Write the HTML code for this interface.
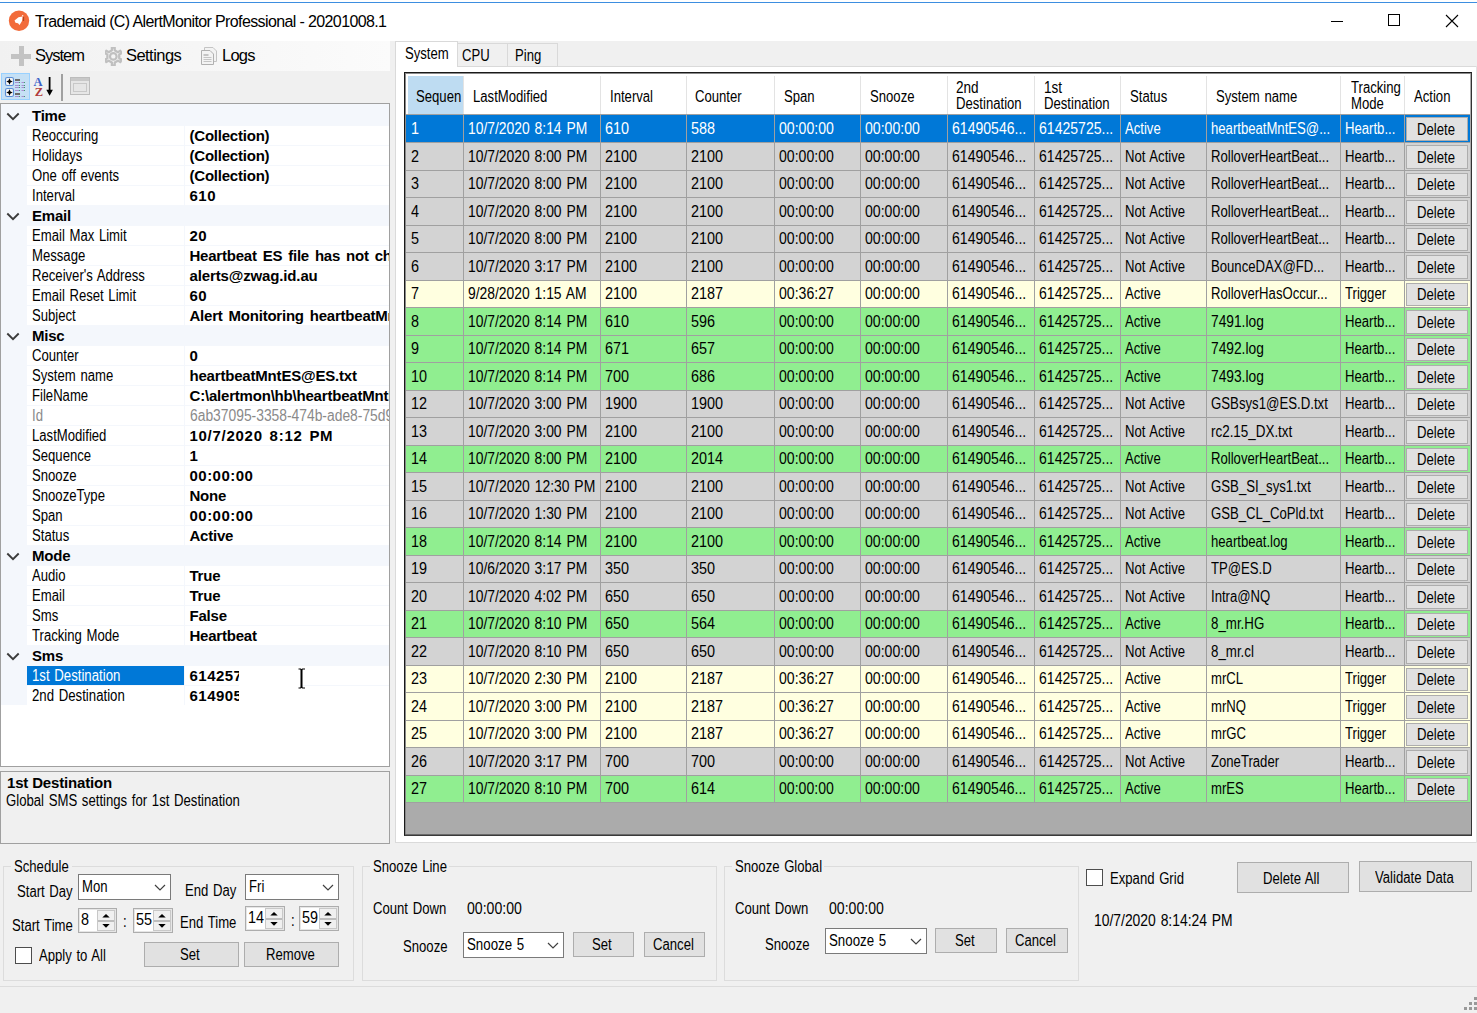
<!DOCTYPE html>
<html><head><meta charset="utf-8"><style>
html,body{margin:0;padding:0}
body{width:1477px;height:1013px;position:relative;overflow:hidden;background:#f0f0f0;font-family:"Liberation Sans",sans-serif;color:#000}
body div{position:absolute}
.t{white-space:pre}
.btn{background:#e1e1e1;border:1px solid #adadad;box-sizing:border-box;text-align:center;font-size:14.5px;letter-spacing:-0.6px;white-space:pre}
</style></head><body>
<div style="left:0px;top:0px;width:1477px;height:41px;background:#fff"></div>
<div style="left:0px;top:2px;width:1477px;height:1px;background:#3d8ee0"></div>
<svg style="position:absolute;left:8px;top:10px" width="22" height="22" viewBox="0 0 22 22"><circle cx="11" cy="10.8" r="10.2" fill="#f26b3a"/><path d="M6.5 10.5 L10.5 7.2 L14.5 6.5 L14 11 L12.5 13.5 L11.5 15 L10 13.2 L7.5 12.8 Z" fill="#fff"/><path d="M14.3 6.3 L15 5.2" stroke="#fff" stroke-width="1.2"/><path d="M15.6 7 V11" stroke="#9a3b1e" stroke-width="0.9"/></svg>
<div class="t" style="left:35px;top:13.76px;font-size:16px;line-height:16px;letter-spacing:-0.62px;word-spacing:0px;color:#000;">Trademaid (C) AlertMonitor Professional - 20201008.1</div>
<div style="left:1331px;top:21px;width:12px;height:1px;background:#000"></div>
<div style="left:1388px;top:14px;width:10px;height:10px;border:1px solid #000"></div>
<svg style="position:absolute;left:1445px;top:14px" width="14" height="14" viewBox="0 0 14 14"><path d="M1 1 L13 13 M13 1 L1 13" stroke="#000" stroke-width="1.1"/></svg>
<div style="left:0px;top:41px;width:390px;height:30px;background:linear-gradient(to right,#f1f1f1,#fbfbfb)"></div>
<div style="left:11px;top:54px;width:20px;height:5px;background:#c3c3c3"></div>
<div style="left:19px;top:46px;width:5px;height:20px;background:#c3c3c3"></div>
<div class="t" style="left:35px;top:47.03px;font-size:16.5px;line-height:16.5px;letter-spacing:-1.00px;word-spacing:0px;color:#000;">System</div>
<svg style="position:absolute;left:105px;top:47px" width="17" height="19" viewBox="0 0 17 19"><path d="M6.91 3.36 L6.89 0.51 L9.71 0.51 L9.69 3.36 L12.83 5.17 L15.29 3.74 L16.70 6.17 L14.23 7.59 L14.23 11.21 L16.70 12.63 L15.29 15.06 L12.83 13.63 L9.69 15.44 L9.71 18.29 L6.89 18.29 L6.91 15.44 L3.77 13.63 L1.31 15.06 L-0.10 12.63 L2.37 11.21 L2.37 7.59 L-0.10 6.17 L1.31 3.74 L3.77 5.17 Z" fill="none" stroke="#c0c0c0" stroke-width="2.3" stroke-linejoin="round"/><circle cx="8.3" cy="9.4" r="3.3" fill="none" stroke="#c0c0c0" stroke-width="2.2"/></svg>
<div class="t" style="left:126px;top:47.03px;font-size:16.5px;line-height:16.5px;letter-spacing:-0.55px;word-spacing:0px;color:#000;">Settings</div>
<svg style="position:absolute;left:200px;top:46px" width="18" height="20" viewBox="0 0 18 20"><path d="M4.5 1.5 H13 L16.5 5 V15.5 H4.5 Z" fill="#f3f3f3" stroke="#c4c4c4"/><path d="M1.5 4.5 H10 L13.5 8 V18.5 H1.5 Z" fill="#f3f3f3" stroke="#b0b0b0"/><rect x="3.5" y="8" width="5" height="2" fill="#c4c4c4"/><rect x="3.5" y="11" width="8" height="1" fill="#c4c4c4"/><rect x="3.5" y="13" width="8" height="1" fill="#c4c4c4"/><rect x="3.5" y="15" width="8" height="1" fill="#c4c4c4"/></svg>
<div class="t" style="left:222px;top:47.03px;font-size:16.5px;line-height:16.5px;letter-spacing:-0.80px;word-spacing:0px;color:#000;">Logs</div>
<div style="left:0px;top:71px;width:390px;height:32px;background:#f0f0f0"></div>
<div style="left:1px;top:73px;width:29px;height:27px;background:#c5e0f5;border:1px solid #99d1ff;box-sizing:border-box"></div>
<svg style="position:absolute;left:0px;top:70px" width="100" height="33" viewBox="0 70 100 33"><rect x="5.5" y="77.5" width="8" height="8" rx="1.8" fill="#f4f4f4" stroke="#5a8ed6" stroke-width="1.1"/><rect x="5.5" y="88.5" width="8" height="8" rx="1.8" fill="#f4f4f4" stroke="#5a8ed6" stroke-width="1.1"/><path d="M9.5 78.3 L10.5 80.5 L12.7 81.5 L10.5 82.5 L9.5 84.7 L8.5 82.5 L6.3 81.5 L8.5 80.5 Z" fill="#000"/><path d="M9.5 89.3 L10.5 91.5 L12.7 92.5 L10.5 93.5 L9.5 95.7 L8.5 93.5 L6.3 92.5 L8.5 91.5 Z" fill="#000"/><rect x="15" y="79" width="5" height="2" fill="#6a6a6a"/><rect x="15" y="93" width="5" height="2" fill="#6a6a6a"/><rect x="15" y="82" width="4" height="1" fill="#a98fd0"/><rect x="19" y="82" width="1" height="1" fill="#3f9f6f"/><rect x="21.5" y="82" width="2.5" height="1" fill="#a98fd0"/><rect x="24" y="82" width="1" height="1" fill="#3f9f6f"/><rect x="15" y="85" width="4" height="1" fill="#a98fd0"/><rect x="19" y="85" width="1" height="1" fill="#3f9f6f"/><rect x="21.5" y="85" width="2.5" height="1" fill="#a98fd0"/><rect x="24" y="85" width="1" height="1" fill="#3f9f6f"/><rect x="15" y="87" width="4" height="1" fill="#a98fd0"/><rect x="19" y="87" width="1" height="1" fill="#3f9f6f"/><rect x="21.5" y="87" width="2.5" height="1" fill="#a98fd0"/><rect x="24" y="87" width="1" height="1" fill="#3f9f6f"/><rect x="15" y="90" width="4" height="1" fill="#a98fd0"/><rect x="19" y="90" width="1" height="1" fill="#3f9f6f"/><rect x="21.5" y="90" width="2.5" height="1" fill="#a98fd0"/><rect x="24" y="90" width="1" height="1" fill="#3f9f6f"/><rect x="15" y="96" width="4" height="1" fill="#a98fd0"/><rect x="19" y="96" width="1" height="1" fill="#3f9f6f"/><rect x="21.5" y="96" width="2.5" height="1" fill="#a98fd0"/><rect x="24" y="96" width="1" height="1" fill="#3f9f6f"/><text x="33.6" y="85.8" font-family="Liberation Serif" font-size="12.5" font-weight="bold" fill="#3f63c9">A</text><text x="34.8" y="95.8" font-family="Liberation Serif" font-size="12.5" font-weight="bold" fill="#b03a3a">Z</text><rect x="48.7" y="77" width="1.8" height="14" fill="#000"/><path d="M46.3 89.8 L52.9 89.8 L49.6 95.8 Z" fill="#000"/></svg>
<div style="left:61px;top:74px;width:2px;height:27px;background:#a0a0a0"></div>
<svg style="position:absolute;left:69px;top:76px" width="22" height="20" viewBox="0 0 22 20"><rect x="1.5" y="1.5" width="19" height="17" fill="#e6e6e6" stroke="#bcbcbc"/><rect x="2" y="2" width="18" height="3" fill="#c8c8c8"/><rect x="4.5" y="7.5" width="13" height="8" fill="none" stroke="#c8c8c8"/></svg>
<div style="left:0px;top:103px;width:390px;height:664px;background:#fff;border:1px solid #a0a0a0;box-sizing:border-box"></div>
<div style="left:1px;top:104px;width:388px;height:601px;background:#f4f7fc"></div>
<div style="left:1px;top:104px;width:388px;height:22px;background:#f4f7fc"></div>
<svg style="position:absolute;left:5.5px;top:111.5px" width="14" height="10" viewBox="0 0 14 10"><path d="M1.3 1.5 L7 7.2 L12.7 1.5" fill="none" stroke="#3c3c3c" stroke-width="1.9"/></svg>
<div class="t" style="left:32px;top:107.80px;font-size:15px;line-height:15px;letter-spacing:-0.22px;word-spacing:0px;font-weight:bold;color:#000;">Time</div>
<div style="left:27px;top:126px;width:157px;height:19px;background:#fff"></div>
<div style="left:185px;top:126px;width:204px;height:19px;background:#fff"></div>
<div class="t" style="left:32px;top:127.96px;font-size:16.0px;line-height:16.0px;word-spacing:1.22px;transform:scaleX(0.8200);transform-origin:0 0;color:#000;">Reoccuring</div>
<div style="left:185px;top:126px;width:204px;height:19px;overflow:hidden">
<div class="t" style="left:4.5px;top:1.80px;font-size:15px;line-height:15px;letter-spacing:-0.22px;word-spacing:2px;font-weight:bold;color:#000;">(Collection)</div>
</div>
<div style="left:27px;top:146px;width:157px;height:19px;background:#fff"></div>
<div style="left:185px;top:146px;width:204px;height:19px;background:#fff"></div>
<div class="t" style="left:32px;top:147.96px;font-size:16.0px;line-height:16.0px;word-spacing:1.22px;transform:scaleX(0.8200);transform-origin:0 0;color:#000;">Holidays</div>
<div style="left:185px;top:146px;width:204px;height:19px;overflow:hidden">
<div class="t" style="left:4.5px;top:1.80px;font-size:15px;line-height:15px;letter-spacing:-0.22px;word-spacing:2px;font-weight:bold;color:#000;">(Collection)</div>
</div>
<div style="left:27px;top:166px;width:157px;height:19px;background:#fff"></div>
<div style="left:185px;top:166px;width:204px;height:19px;background:#fff"></div>
<div class="t" style="left:32px;top:167.96px;font-size:16.0px;line-height:16.0px;word-spacing:1.22px;transform:scaleX(0.8200);transform-origin:0 0;color:#000;">One off events</div>
<div style="left:185px;top:166px;width:204px;height:19px;overflow:hidden">
<div class="t" style="left:4.5px;top:1.80px;font-size:15px;line-height:15px;letter-spacing:-0.22px;word-spacing:2px;font-weight:bold;color:#000;">(Collection)</div>
</div>
<div style="left:27px;top:186px;width:157px;height:19px;background:#fff"></div>
<div style="left:185px;top:186px;width:204px;height:19px;background:#fff"></div>
<div class="t" style="left:32px;top:187.96px;font-size:16.0px;line-height:16.0px;word-spacing:1.22px;transform:scaleX(0.8200);transform-origin:0 0;color:#000;">Interval</div>
<div style="left:185px;top:186px;width:204px;height:19px;overflow:hidden">
<div class="t" style="left:4.5px;top:1.80px;font-size:15px;line-height:15px;letter-spacing:0.48px;word-spacing:2px;font-weight:bold;color:#000;">610</div>
</div>
<div style="left:1px;top:206px;width:388px;height:20px;background:#f4f7fc"></div>
<svg style="position:absolute;left:5.5px;top:211.5px" width="14" height="10" viewBox="0 0 14 10"><path d="M1.3 1.5 L7 7.2 L12.7 1.5" fill="none" stroke="#3c3c3c" stroke-width="1.9"/></svg>
<div class="t" style="left:32px;top:207.80px;font-size:15px;line-height:15px;letter-spacing:-0.22px;word-spacing:0px;font-weight:bold;color:#000;">Email</div>
<div style="left:27px;top:226px;width:157px;height:19px;background:#fff"></div>
<div style="left:185px;top:226px;width:204px;height:19px;background:#fff"></div>
<div class="t" style="left:32px;top:227.96px;font-size:16.0px;line-height:16.0px;word-spacing:1.22px;transform:scaleX(0.8200);transform-origin:0 0;color:#000;">Email Max Limit</div>
<div style="left:185px;top:226px;width:204px;height:19px;overflow:hidden">
<div class="t" style="left:4.5px;top:1.80px;font-size:15px;line-height:15px;letter-spacing:0.48px;word-spacing:2px;font-weight:bold;color:#000;">20</div>
</div>
<div style="left:27px;top:246px;width:157px;height:19px;background:#fff"></div>
<div style="left:185px;top:246px;width:204px;height:19px;background:#fff"></div>
<div class="t" style="left:32px;top:247.96px;font-size:16.0px;line-height:16.0px;word-spacing:1.22px;transform:scaleX(0.8200);transform-origin:0 0;color:#000;">Message</div>
<div style="left:185px;top:246px;width:204px;height:19px;overflow:hidden">
<div class="t" style="left:4.5px;top:1.80px;font-size:15px;line-height:15px;letter-spacing:-0.22px;word-spacing:2px;font-weight:bold;color:#000;">Heartbeat ES file has not changed</div>
</div>
<div style="left:27px;top:266px;width:157px;height:19px;background:#fff"></div>
<div style="left:185px;top:266px;width:204px;height:19px;background:#fff"></div>
<div class="t" style="left:32px;top:267.96px;font-size:16.0px;line-height:16.0px;word-spacing:1.22px;transform:scaleX(0.8200);transform-origin:0 0;color:#000;">Receiver's Address</div>
<div style="left:185px;top:266px;width:204px;height:19px;overflow:hidden">
<div class="t" style="left:4.5px;top:1.80px;font-size:15px;line-height:15px;letter-spacing:-0.14px;word-spacing:2px;font-weight:bold;color:#000;">alerts@zwag.id.au</div>
</div>
<div style="left:27px;top:286px;width:157px;height:19px;background:#fff"></div>
<div style="left:185px;top:286px;width:204px;height:19px;background:#fff"></div>
<div class="t" style="left:32px;top:287.96px;font-size:16.0px;line-height:16.0px;word-spacing:1.22px;transform:scaleX(0.8200);transform-origin:0 0;color:#000;">Email Reset Limit</div>
<div style="left:185px;top:286px;width:204px;height:19px;overflow:hidden">
<div class="t" style="left:4.5px;top:1.80px;font-size:15px;line-height:15px;letter-spacing:0.48px;word-spacing:2px;font-weight:bold;color:#000;">60</div>
</div>
<div style="left:27px;top:306px;width:157px;height:19px;background:#fff"></div>
<div style="left:185px;top:306px;width:204px;height:19px;background:#fff"></div>
<div class="t" style="left:32px;top:307.96px;font-size:16.0px;line-height:16.0px;word-spacing:1.22px;transform:scaleX(0.8200);transform-origin:0 0;color:#000;">Subject</div>
<div style="left:185px;top:306px;width:204px;height:19px;overflow:hidden">
<div class="t" style="left:4.5px;top:1.80px;font-size:15px;line-height:15px;letter-spacing:-0.22px;word-spacing:2px;font-weight:bold;color:#000;">Alert Monitoring heartbeatMntES</div>
</div>
<div style="left:1px;top:326px;width:388px;height:20px;background:#f4f7fc"></div>
<svg style="position:absolute;left:5.5px;top:331.5px" width="14" height="10" viewBox="0 0 14 10"><path d="M1.3 1.5 L7 7.2 L12.7 1.5" fill="none" stroke="#3c3c3c" stroke-width="1.9"/></svg>
<div class="t" style="left:32px;top:327.80px;font-size:15px;line-height:15px;letter-spacing:-0.22px;word-spacing:0px;font-weight:bold;color:#000;">Misc</div>
<div style="left:27px;top:346px;width:157px;height:19px;background:#fff"></div>
<div style="left:185px;top:346px;width:204px;height:19px;background:#fff"></div>
<div class="t" style="left:32px;top:347.96px;font-size:16.0px;line-height:16.0px;word-spacing:1.22px;transform:scaleX(0.8200);transform-origin:0 0;color:#000;">Counter</div>
<div style="left:185px;top:346px;width:204px;height:19px;overflow:hidden">
<div class="t" style="left:4.5px;top:1.80px;font-size:15px;line-height:15px;letter-spacing:0.48px;word-spacing:2px;font-weight:bold;color:#000;">0</div>
</div>
<div style="left:27px;top:366px;width:157px;height:19px;background:#fff"></div>
<div style="left:185px;top:366px;width:204px;height:19px;background:#fff"></div>
<div class="t" style="left:32px;top:367.96px;font-size:16.0px;line-height:16.0px;word-spacing:1.22px;transform:scaleX(0.8200);transform-origin:0 0;color:#000;">System name</div>
<div style="left:185px;top:366px;width:204px;height:19px;overflow:hidden">
<div class="t" style="left:4.5px;top:1.80px;font-size:15px;line-height:15px;letter-spacing:-0.19px;word-spacing:2px;font-weight:bold;color:#000;">heartbeatMntES@ES.txt</div>
</div>
<div style="left:27px;top:386px;width:157px;height:19px;background:#fff"></div>
<div style="left:185px;top:386px;width:204px;height:19px;background:#fff"></div>
<div class="t" style="left:32px;top:387.96px;font-size:16.0px;line-height:16.0px;word-spacing:1.22px;transform:scaleX(0.8200);transform-origin:0 0;color:#000;">FileName</div>
<div style="left:185px;top:386px;width:204px;height:19px;overflow:hidden">
<div class="t" style="left:4.5px;top:1.80px;font-size:15px;line-height:15px;letter-spacing:-0.20px;word-spacing:2px;font-weight:bold;color:#000;">C:\alertmon\hb\heartbeatMntES</div>
</div>
<div style="left:27px;top:406px;width:157px;height:19px;background:#fff"></div>
<div style="left:185px;top:406px;width:204px;height:19px;background:#fff"></div>
<div class="t" style="left:32px;top:407.96px;font-size:16.0px;line-height:16.0px;word-spacing:1.22px;transform:scaleX(0.8200);transform-origin:0 0;color:#8a8a8a;">Id</div>
<div style="left:185px;top:406px;width:204px;height:19px;overflow:hidden">
<div class="t" style="left:4.5px;top:1.96px;font-size:16.0px;line-height:16.0px;word-spacing:1.16px;transform:scaleX(0.8650);transform-origin:0 0;color:#8a8a8a;">6ab37095-3358-474b-ade8-75d93abc</div>
</div>
<div style="left:27px;top:426px;width:157px;height:19px;background:#fff"></div>
<div style="left:185px;top:426px;width:204px;height:19px;background:#fff"></div>
<div class="t" style="left:32px;top:427.96px;font-size:16.0px;line-height:16.0px;word-spacing:1.22px;transform:scaleX(0.8200);transform-origin:0 0;color:#000;">LastModified</div>
<div style="left:185px;top:426px;width:204px;height:19px;overflow:hidden">
<div class="t" style="left:4.5px;top:1.80px;font-size:15px;line-height:15px;letter-spacing:0.72px;word-spacing:2px;font-weight:bold;color:#000;">10/7/2020 8:12 PM</div>
</div>
<div style="left:27px;top:446px;width:157px;height:19px;background:#fff"></div>
<div style="left:185px;top:446px;width:204px;height:19px;background:#fff"></div>
<div class="t" style="left:32px;top:447.96px;font-size:16.0px;line-height:16.0px;word-spacing:1.22px;transform:scaleX(0.8200);transform-origin:0 0;color:#000;">Sequence</div>
<div style="left:185px;top:446px;width:204px;height:19px;overflow:hidden">
<div class="t" style="left:4.5px;top:1.80px;font-size:15px;line-height:15px;letter-spacing:0.48px;word-spacing:2px;font-weight:bold;color:#000;">1</div>
</div>
<div style="left:27px;top:466px;width:157px;height:19px;background:#fff"></div>
<div style="left:185px;top:466px;width:204px;height:19px;background:#fff"></div>
<div class="t" style="left:32px;top:467.96px;font-size:16.0px;line-height:16.0px;word-spacing:1.22px;transform:scaleX(0.8200);transform-origin:0 0;color:#000;">Snooze</div>
<div style="left:185px;top:466px;width:204px;height:19px;overflow:hidden">
<div class="t" style="left:4.5px;top:1.80px;font-size:15px;line-height:15px;letter-spacing:0.48px;word-spacing:2px;font-weight:bold;color:#000;">00:00:00</div>
</div>
<div style="left:27px;top:486px;width:157px;height:19px;background:#fff"></div>
<div style="left:185px;top:486px;width:204px;height:19px;background:#fff"></div>
<div class="t" style="left:32px;top:487.96px;font-size:16.0px;line-height:16.0px;word-spacing:1.22px;transform:scaleX(0.8200);transform-origin:0 0;color:#000;">SnoozeType</div>
<div style="left:185px;top:486px;width:204px;height:19px;overflow:hidden">
<div class="t" style="left:4.5px;top:1.80px;font-size:15px;line-height:15px;letter-spacing:-0.22px;word-spacing:2px;font-weight:bold;color:#000;">None</div>
</div>
<div style="left:27px;top:506px;width:157px;height:19px;background:#fff"></div>
<div style="left:185px;top:506px;width:204px;height:19px;background:#fff"></div>
<div class="t" style="left:32px;top:507.96px;font-size:16.0px;line-height:16.0px;word-spacing:1.22px;transform:scaleX(0.8200);transform-origin:0 0;color:#000;">Span</div>
<div style="left:185px;top:506px;width:204px;height:19px;overflow:hidden">
<div class="t" style="left:4.5px;top:1.80px;font-size:15px;line-height:15px;letter-spacing:0.48px;word-spacing:2px;font-weight:bold;color:#000;">00:00:00</div>
</div>
<div style="left:27px;top:526px;width:157px;height:19px;background:#fff"></div>
<div style="left:185px;top:526px;width:204px;height:19px;background:#fff"></div>
<div class="t" style="left:32px;top:527.96px;font-size:16.0px;line-height:16.0px;word-spacing:1.22px;transform:scaleX(0.8200);transform-origin:0 0;color:#000;">Status</div>
<div style="left:185px;top:526px;width:204px;height:19px;overflow:hidden">
<div class="t" style="left:4.5px;top:1.80px;font-size:15px;line-height:15px;letter-spacing:-0.22px;word-spacing:2px;font-weight:bold;color:#000;">Active</div>
</div>
<div style="left:1px;top:546px;width:388px;height:20px;background:#f4f7fc"></div>
<svg style="position:absolute;left:5.5px;top:551.5px" width="14" height="10" viewBox="0 0 14 10"><path d="M1.3 1.5 L7 7.2 L12.7 1.5" fill="none" stroke="#3c3c3c" stroke-width="1.9"/></svg>
<div class="t" style="left:32px;top:547.80px;font-size:15px;line-height:15px;letter-spacing:-0.22px;word-spacing:0px;font-weight:bold;color:#000;">Mode</div>
<div style="left:27px;top:566px;width:157px;height:19px;background:#fff"></div>
<div style="left:185px;top:566px;width:204px;height:19px;background:#fff"></div>
<div class="t" style="left:32px;top:567.96px;font-size:16.0px;line-height:16.0px;word-spacing:1.22px;transform:scaleX(0.8200);transform-origin:0 0;color:#000;">Audio</div>
<div style="left:185px;top:566px;width:204px;height:19px;overflow:hidden">
<div class="t" style="left:4.5px;top:1.80px;font-size:15px;line-height:15px;letter-spacing:-0.22px;word-spacing:2px;font-weight:bold;color:#000;">True</div>
</div>
<div style="left:27px;top:586px;width:157px;height:19px;background:#fff"></div>
<div style="left:185px;top:586px;width:204px;height:19px;background:#fff"></div>
<div class="t" style="left:32px;top:587.96px;font-size:16.0px;line-height:16.0px;word-spacing:1.22px;transform:scaleX(0.8200);transform-origin:0 0;color:#000;">Email</div>
<div style="left:185px;top:586px;width:204px;height:19px;overflow:hidden">
<div class="t" style="left:4.5px;top:1.80px;font-size:15px;line-height:15px;letter-spacing:-0.22px;word-spacing:2px;font-weight:bold;color:#000;">True</div>
</div>
<div style="left:27px;top:606px;width:157px;height:19px;background:#fff"></div>
<div style="left:185px;top:606px;width:204px;height:19px;background:#fff"></div>
<div class="t" style="left:32px;top:607.96px;font-size:16.0px;line-height:16.0px;word-spacing:1.22px;transform:scaleX(0.8200);transform-origin:0 0;color:#000;">Sms</div>
<div style="left:185px;top:606px;width:204px;height:19px;overflow:hidden">
<div class="t" style="left:4.5px;top:1.80px;font-size:15px;line-height:15px;letter-spacing:-0.22px;word-spacing:2px;font-weight:bold;color:#000;">False</div>
</div>
<div style="left:27px;top:626px;width:157px;height:19px;background:#fff"></div>
<div style="left:185px;top:626px;width:204px;height:19px;background:#fff"></div>
<div class="t" style="left:32px;top:627.96px;font-size:16.0px;line-height:16.0px;word-spacing:1.22px;transform:scaleX(0.8200);transform-origin:0 0;color:#000;">Tracking Mode</div>
<div style="left:185px;top:626px;width:204px;height:19px;overflow:hidden">
<div class="t" style="left:4.5px;top:1.80px;font-size:15px;line-height:15px;letter-spacing:-0.22px;word-spacing:2px;font-weight:bold;color:#000;">Heartbeat</div>
</div>
<div style="left:1px;top:646px;width:388px;height:20px;background:#f4f7fc"></div>
<svg style="position:absolute;left:5.5px;top:651.5px" width="14" height="10" viewBox="0 0 14 10"><path d="M1.3 1.5 L7 7.2 L12.7 1.5" fill="none" stroke="#3c3c3c" stroke-width="1.9"/></svg>
<div class="t" style="left:32px;top:647.80px;font-size:15px;line-height:15px;letter-spacing:-0.22px;word-spacing:0px;font-weight:bold;color:#000;">Sms</div>
<div style="left:27px;top:666px;width:157px;height:19px;background:#0078d7"></div>
<div style="left:185px;top:666px;width:204px;height:19px;background:#fff"></div>
<div class="t" style="left:32px;top:667.96px;font-size:16.0px;line-height:16.0px;word-spacing:1.21px;transform:scaleX(0.8253);transform-origin:0 0;color:#fff;">1st Destination</div>
<div style="left:185px;top:666px;width:54px;height:19px;overflow:hidden">
<div class="t" style="left:4.5px;top:1.80px;font-size:15px;line-height:15px;letter-spacing:0.48px;word-spacing:0px;font-weight:bold;color:#000;">614257</div>
</div>
<div style="left:27px;top:686px;width:157px;height:19px;background:#fff"></div>
<div style="left:185px;top:686px;width:204px;height:19px;background:#fff"></div>
<div class="t" style="left:32px;top:687.96px;font-size:16.0px;line-height:16.0px;word-spacing:1.21px;transform:scaleX(0.8253);transform-origin:0 0;color:#000;">2nd Destination</div>
<div style="left:185px;top:686px;width:54px;height:19px;overflow:hidden">
<div class="t" style="left:4.5px;top:1.80px;font-size:15px;line-height:15px;letter-spacing:0.48px;word-spacing:0px;font-weight:bold;color:#000;">614905</div>
</div>
<div style="left:239px;top:685px;width:64px;height:1px;background:#fff"></div>
<svg style="position:absolute;left:297px;top:668px" width="9" height="21" viewBox="0 0 9 21"><path d="M1.5 1 H3.5 L4.5 2 L5.5 1 H8 M1.5 20 H3.5 L4.5 19 L5.5 20 H8" fill="none" stroke="#000" stroke-width="1.2"/><rect x="3.5" y="2" width="2" height="17" fill="#000"/></svg>
<div style="left:0px;top:771px;width:390px;height:73px;background:#f0f0f0;border:1px solid #a0a0a0;box-sizing:border-box"></div>
<div class="t" style="left:7px;top:775.30px;font-size:15px;line-height:15px;letter-spacing:-0.17px;word-spacing:0px;font-weight:bold;color:#000;">1st Destination</div>
<div class="t" style="left:6px;top:793.46px;font-size:16.0px;line-height:16.0px;word-spacing:1.22px;transform:scaleX(0.8221);transform-origin:0 0;color:#000;">Global SMS settings for 1st Destination</div>
<div style="left:395px;top:66px;width:1082px;height:777px;background:#fff;border:1px solid #dadada;border-right:none;box-sizing:border-box"></div>
<div style="left:1476px;top:66px;width:1px;height:777px;background:#e3e3e3"></div>
<div style="left:457px;top:43px;width:51px;height:24px;background:#f0f0f0;border:1px solid #d9d9d9;box-sizing:border-box"></div>
<div style="left:507px;top:43px;width:51px;height:24px;background:#f0f0f0;border:1px solid #d9d9d9;box-sizing:border-box"></div>
<div style="left:395px;top:41px;width:63px;height:26px;background:#fff;border:1px solid #d9d9d9;border-bottom:none;box-sizing:border-box"></div>
<div class="t" style="left:405px;top:45.96px;font-size:16.0px;line-height:16.0px;word-spacing:1.22px;transform:scaleX(0.8200);transform-origin:0 0;color:#000;">System</div>
<div class="t" style="left:462px;top:48.46px;font-size:16.0px;line-height:16.0px;word-spacing:1.22px;transform:scaleX(0.8200);transform-origin:0 0;color:#000;">CPU</div>
<div class="t" style="left:515px;top:48.46px;font-size:16.0px;line-height:16.0px;word-spacing:1.22px;transform:scaleX(0.8200);transform-origin:0 0;color:#000;">Ping</div>
<div style="left:404px;top:72px;width:1068px;height:764px;background:#ababab;border:1px solid #1a1a1a;border-right-color:#333;border-bottom-color:#3a3a3a;box-sizing:border-box"></div>
<div style="left:405px;top:73px;width:1066px;height:762px;border-left:1px solid #8a8a8a;border-top:1px solid #8a8a8a;box-sizing:border-box;background:transparent"></div>
<div style="left:405px;top:834px;width:1066px;height:1px;background:#6a6a6a"></div>
<div style="left:406px;top:74px;width:1064px;height:41px;background:#fff"></div>
<div style="left:408px;top:76px;width:55px;height:38px;background:#bedcf2"></div>
<div style="left:406px;top:114px;width:1064px;height:1px;background:#a0a0a0"></div>
<div style="left:463px;top:76px;width:1px;height:38px;background:#e3e3e3"></div>
<div style="left:600px;top:76px;width:1px;height:38px;background:#e3e3e3"></div>
<div style="left:686px;top:76px;width:1px;height:38px;background:#e3e3e3"></div>
<div style="left:774px;top:76px;width:1px;height:38px;background:#e3e3e3"></div>
<div style="left:860px;top:76px;width:1px;height:38px;background:#e3e3e3"></div>
<div style="left:947px;top:76px;width:1px;height:38px;background:#e3e3e3"></div>
<div style="left:1034px;top:76px;width:1px;height:38px;background:#e3e3e3"></div>
<div style="left:1120px;top:76px;width:1px;height:38px;background:#e3e3e3"></div>
<div style="left:1206px;top:76px;width:1px;height:38px;background:#e3e3e3"></div>
<div style="left:1340px;top:76px;width:1px;height:38px;background:#e3e3e3"></div>
<div style="left:1404px;top:76px;width:1px;height:38px;background:#e3e3e3"></div>
<div class="t" style="left:416px;top:89.46px;font-size:16.0px;line-height:16.0px;word-spacing:1.22px;transform:scaleX(0.8200);transform-origin:0 0;color:#000;">Sequen</div>
<div class="t" style="left:473px;top:89.46px;font-size:16.0px;line-height:16.0px;word-spacing:1.22px;transform:scaleX(0.8200);transform-origin:0 0;color:#000;">LastModified</div>
<div class="t" style="left:610px;top:89.46px;font-size:16.0px;line-height:16.0px;word-spacing:1.22px;transform:scaleX(0.8200);transform-origin:0 0;color:#000;">Interval</div>
<div class="t" style="left:695px;top:89.46px;font-size:16.0px;line-height:16.0px;word-spacing:1.22px;transform:scaleX(0.8200);transform-origin:0 0;color:#000;">Counter</div>
<div class="t" style="left:784px;top:89.46px;font-size:16.0px;line-height:16.0px;word-spacing:1.22px;transform:scaleX(0.8200);transform-origin:0 0;color:#000;">Span</div>
<div class="t" style="left:870px;top:89.46px;font-size:16.0px;line-height:16.0px;word-spacing:1.22px;transform:scaleX(0.8200);transform-origin:0 0;color:#000;">Snooze</div>
<div class="t" style="left:956px;top:80.46px;font-size:16.0px;line-height:16.0px;word-spacing:1.18px;transform:scaleX(0.8467);transform-origin:0 0;color:#000;">2nd</div>
<div class="t" style="left:956px;top:96.46px;font-size:16.0px;line-height:16.0px;word-spacing:1.22px;transform:scaleX(0.8200);transform-origin:0 0;color:#000;">Destination</div>
<div class="t" style="left:1044px;top:80.46px;font-size:16.0px;line-height:16.0px;word-spacing:1.18px;transform:scaleX(0.8467);transform-origin:0 0;color:#000;">1st</div>
<div class="t" style="left:1044px;top:96.46px;font-size:16.0px;line-height:16.0px;word-spacing:1.22px;transform:scaleX(0.8200);transform-origin:0 0;color:#000;">Destination</div>
<div class="t" style="left:1130px;top:89.46px;font-size:16.0px;line-height:16.0px;word-spacing:1.22px;transform:scaleX(0.8200);transform-origin:0 0;color:#000;">Status</div>
<div class="t" style="left:1216px;top:89.46px;font-size:16.0px;line-height:16.0px;word-spacing:1.22px;transform:scaleX(0.8200);transform-origin:0 0;color:#000;">System name</div>
<div class="t" style="left:1351px;top:80.46px;font-size:16.0px;line-height:16.0px;word-spacing:1.22px;transform:scaleX(0.8200);transform-origin:0 0;color:#000;">Tracking</div>
<div class="t" style="left:1351px;top:96.46px;font-size:16.0px;line-height:16.0px;word-spacing:1.22px;transform:scaleX(0.8200);transform-origin:0 0;color:#000;">Mode</div>
<div class="t" style="left:1414px;top:89.46px;font-size:16.0px;line-height:16.0px;word-spacing:1.22px;transform:scaleX(0.8200);transform-origin:0 0;color:#000;">Action</div>
<div style="left:406px;top:115px;width:1064px;height:27px;background:#0078d7"></div>
<div style="left:406px;top:142px;width:1064px;height:1px;background:#a0a0a0"></div>
<div style="left:463px;top:115px;width:1px;height:27px;background:#a0a0a0"></div>
<div style="left:600px;top:115px;width:1px;height:27px;background:#a0a0a0"></div>
<div style="left:686px;top:115px;width:1px;height:27px;background:#a0a0a0"></div>
<div style="left:774px;top:115px;width:1px;height:27px;background:#a0a0a0"></div>
<div style="left:860px;top:115px;width:1px;height:27px;background:#a0a0a0"></div>
<div style="left:947px;top:115px;width:1px;height:27px;background:#a0a0a0"></div>
<div style="left:1034px;top:115px;width:1px;height:27px;background:#a0a0a0"></div>
<div style="left:1120px;top:115px;width:1px;height:27px;background:#a0a0a0"></div>
<div style="left:1206px;top:115px;width:1px;height:27px;background:#a0a0a0"></div>
<div style="left:1340px;top:115px;width:1px;height:27px;background:#a0a0a0"></div>
<div style="left:1404px;top:115px;width:1px;height:27px;background:#a0a0a0"></div>
<div class="t" style="left:411px;top:120.96px;font-size:16.0px;line-height:16.0px;word-spacing:1.11px;transform:scaleX(0.9000);transform-origin:0 0;color:#fff;">1</div>
<div class="t" style="left:468px;top:120.96px;font-size:16.0px;line-height:16.0px;word-spacing:1.15px;transform:scaleX(0.8671);transform-origin:0 0;color:#fff;">10/7/2020 8:14 PM</div>
<div class="t" style="left:605px;top:120.96px;font-size:16.0px;line-height:16.0px;word-spacing:1.11px;transform:scaleX(0.9000);transform-origin:0 0;color:#fff;">610</div>
<div class="t" style="left:691px;top:120.96px;font-size:16.0px;line-height:16.0px;word-spacing:1.11px;transform:scaleX(0.9000);transform-origin:0 0;color:#fff;">588</div>
<div class="t" style="left:779px;top:120.96px;font-size:16.0px;line-height:16.0px;word-spacing:1.14px;transform:scaleX(0.8800);transform-origin:0 0;color:#fff;">00:00:00</div>
<div class="t" style="left:865px;top:120.96px;font-size:16.0px;line-height:16.0px;word-spacing:1.14px;transform:scaleX(0.8800);transform-origin:0 0;color:#fff;">00:00:00</div>
<div class="t" style="left:952px;top:120.96px;font-size:16.0px;line-height:16.0px;word-spacing:1.14px;transform:scaleX(0.8782);transform-origin:0 0;color:#fff;">61490546...</div>
<div class="t" style="left:1039px;top:120.96px;font-size:16.0px;line-height:16.0px;word-spacing:1.14px;transform:scaleX(0.8782);transform-origin:0 0;color:#fff;">61425725...</div>
<div class="t" style="left:1125px;top:120.96px;font-size:16.0px;line-height:16.0px;word-spacing:1.22px;transform:scaleX(0.8200);transform-origin:0 0;color:#fff;">Active</div>
<div class="t" style="left:1211px;top:120.96px;font-size:16.0px;line-height:16.0px;word-spacing:1.22px;transform:scaleX(0.8200);transform-origin:0 0;color:#fff;">heartbeatMntES@...</div>
<div class="t" style="left:1345px;top:120.96px;font-size:16.0px;line-height:16.0px;word-spacing:1.22px;transform:scaleX(0.8200);transform-origin:0 0;color:#fff;">Heartb...</div>
<div class="btn" style="left:1406px;top:117px;width:62px;height:24px"></div>
<div class="t" style="left:1416.5369875px;top:121.76px;font-size:16.0px;line-height:16.0px;word-spacing:1.22px;transform:scaleX(0.8200);transform-origin:0 0;color:#000;">Delete</div>
<div style="left:406px;top:143px;width:1064px;height:27px;background:#d3d3d3"></div>
<div style="left:406px;top:170px;width:1064px;height:1px;background:#a0a0a0"></div>
<div style="left:463px;top:143px;width:1px;height:27px;background:#a0a0a0"></div>
<div style="left:600px;top:143px;width:1px;height:27px;background:#a0a0a0"></div>
<div style="left:686px;top:143px;width:1px;height:27px;background:#a0a0a0"></div>
<div style="left:774px;top:143px;width:1px;height:27px;background:#a0a0a0"></div>
<div style="left:860px;top:143px;width:1px;height:27px;background:#a0a0a0"></div>
<div style="left:947px;top:143px;width:1px;height:27px;background:#a0a0a0"></div>
<div style="left:1034px;top:143px;width:1px;height:27px;background:#a0a0a0"></div>
<div style="left:1120px;top:143px;width:1px;height:27px;background:#a0a0a0"></div>
<div style="left:1206px;top:143px;width:1px;height:27px;background:#a0a0a0"></div>
<div style="left:1340px;top:143px;width:1px;height:27px;background:#a0a0a0"></div>
<div style="left:1404px;top:143px;width:1px;height:27px;background:#a0a0a0"></div>
<div class="t" style="left:411px;top:148.96px;font-size:16.0px;line-height:16.0px;word-spacing:1.11px;transform:scaleX(0.9000);transform-origin:0 0;color:#000;">2</div>
<div class="t" style="left:468px;top:148.96px;font-size:16.0px;line-height:16.0px;word-spacing:1.15px;transform:scaleX(0.8671);transform-origin:0 0;color:#000;">10/7/2020 8:00 PM</div>
<div class="t" style="left:605px;top:148.96px;font-size:16.0px;line-height:16.0px;word-spacing:1.11px;transform:scaleX(0.9000);transform-origin:0 0;color:#000;">2100</div>
<div class="t" style="left:691px;top:148.96px;font-size:16.0px;line-height:16.0px;word-spacing:1.11px;transform:scaleX(0.9000);transform-origin:0 0;color:#000;">2100</div>
<div class="t" style="left:779px;top:148.96px;font-size:16.0px;line-height:16.0px;word-spacing:1.14px;transform:scaleX(0.8800);transform-origin:0 0;color:#000;">00:00:00</div>
<div class="t" style="left:865px;top:148.96px;font-size:16.0px;line-height:16.0px;word-spacing:1.14px;transform:scaleX(0.8800);transform-origin:0 0;color:#000;">00:00:00</div>
<div class="t" style="left:952px;top:148.96px;font-size:16.0px;line-height:16.0px;word-spacing:1.14px;transform:scaleX(0.8782);transform-origin:0 0;color:#000;">61490546...</div>
<div class="t" style="left:1039px;top:148.96px;font-size:16.0px;line-height:16.0px;word-spacing:1.14px;transform:scaleX(0.8782);transform-origin:0 0;color:#000;">61425725...</div>
<div class="t" style="left:1125px;top:148.96px;font-size:16.0px;line-height:16.0px;word-spacing:1.22px;transform:scaleX(0.8200);transform-origin:0 0;color:#000;">Not Active</div>
<div class="t" style="left:1211px;top:148.96px;font-size:16.0px;line-height:16.0px;word-spacing:1.22px;transform:scaleX(0.8200);transform-origin:0 0;color:#000;">RolloverHeartBeat...</div>
<div class="t" style="left:1345px;top:148.96px;font-size:16.0px;line-height:16.0px;word-spacing:1.22px;transform:scaleX(0.8200);transform-origin:0 0;color:#000;">Heartb...</div>
<div class="btn" style="left:1406px;top:145px;width:62px;height:24px"></div>
<div class="t" style="left:1416.5369875px;top:149.76px;font-size:16.0px;line-height:16.0px;word-spacing:1.22px;transform:scaleX(0.8200);transform-origin:0 0;color:#000;">Delete</div>
<div style="left:406px;top:171px;width:1064px;height:26px;background:#d3d3d3"></div>
<div style="left:406px;top:197px;width:1064px;height:1px;background:#a0a0a0"></div>
<div style="left:463px;top:171px;width:1px;height:26px;background:#a0a0a0"></div>
<div style="left:600px;top:171px;width:1px;height:26px;background:#a0a0a0"></div>
<div style="left:686px;top:171px;width:1px;height:26px;background:#a0a0a0"></div>
<div style="left:774px;top:171px;width:1px;height:26px;background:#a0a0a0"></div>
<div style="left:860px;top:171px;width:1px;height:26px;background:#a0a0a0"></div>
<div style="left:947px;top:171px;width:1px;height:26px;background:#a0a0a0"></div>
<div style="left:1034px;top:171px;width:1px;height:26px;background:#a0a0a0"></div>
<div style="left:1120px;top:171px;width:1px;height:26px;background:#a0a0a0"></div>
<div style="left:1206px;top:171px;width:1px;height:26px;background:#a0a0a0"></div>
<div style="left:1340px;top:171px;width:1px;height:26px;background:#a0a0a0"></div>
<div style="left:1404px;top:171px;width:1px;height:26px;background:#a0a0a0"></div>
<div class="t" style="left:411px;top:175.96px;font-size:16.0px;line-height:16.0px;word-spacing:1.11px;transform:scaleX(0.9000);transform-origin:0 0;color:#000;">3</div>
<div class="t" style="left:468px;top:175.96px;font-size:16.0px;line-height:16.0px;word-spacing:1.15px;transform:scaleX(0.8671);transform-origin:0 0;color:#000;">10/7/2020 8:00 PM</div>
<div class="t" style="left:605px;top:175.96px;font-size:16.0px;line-height:16.0px;word-spacing:1.11px;transform:scaleX(0.9000);transform-origin:0 0;color:#000;">2100</div>
<div class="t" style="left:691px;top:175.96px;font-size:16.0px;line-height:16.0px;word-spacing:1.11px;transform:scaleX(0.9000);transform-origin:0 0;color:#000;">2100</div>
<div class="t" style="left:779px;top:175.96px;font-size:16.0px;line-height:16.0px;word-spacing:1.14px;transform:scaleX(0.8800);transform-origin:0 0;color:#000;">00:00:00</div>
<div class="t" style="left:865px;top:175.96px;font-size:16.0px;line-height:16.0px;word-spacing:1.14px;transform:scaleX(0.8800);transform-origin:0 0;color:#000;">00:00:00</div>
<div class="t" style="left:952px;top:175.96px;font-size:16.0px;line-height:16.0px;word-spacing:1.14px;transform:scaleX(0.8782);transform-origin:0 0;color:#000;">61490546...</div>
<div class="t" style="left:1039px;top:175.96px;font-size:16.0px;line-height:16.0px;word-spacing:1.14px;transform:scaleX(0.8782);transform-origin:0 0;color:#000;">61425725...</div>
<div class="t" style="left:1125px;top:175.96px;font-size:16.0px;line-height:16.0px;word-spacing:1.22px;transform:scaleX(0.8200);transform-origin:0 0;color:#000;">Not Active</div>
<div class="t" style="left:1211px;top:175.96px;font-size:16.0px;line-height:16.0px;word-spacing:1.22px;transform:scaleX(0.8200);transform-origin:0 0;color:#000;">RolloverHeartBeat...</div>
<div class="t" style="left:1345px;top:175.96px;font-size:16.0px;line-height:16.0px;word-spacing:1.22px;transform:scaleX(0.8200);transform-origin:0 0;color:#000;">Heartb...</div>
<div class="btn" style="left:1406px;top:173px;width:62px;height:23px"></div>
<div class="t" style="left:1416.5369875px;top:177.26px;font-size:16.0px;line-height:16.0px;word-spacing:1.22px;transform:scaleX(0.8200);transform-origin:0 0;color:#000;">Delete</div>
<div style="left:406px;top:198px;width:1064px;height:27px;background:#d3d3d3"></div>
<div style="left:406px;top:225px;width:1064px;height:1px;background:#a0a0a0"></div>
<div style="left:463px;top:198px;width:1px;height:27px;background:#a0a0a0"></div>
<div style="left:600px;top:198px;width:1px;height:27px;background:#a0a0a0"></div>
<div style="left:686px;top:198px;width:1px;height:27px;background:#a0a0a0"></div>
<div style="left:774px;top:198px;width:1px;height:27px;background:#a0a0a0"></div>
<div style="left:860px;top:198px;width:1px;height:27px;background:#a0a0a0"></div>
<div style="left:947px;top:198px;width:1px;height:27px;background:#a0a0a0"></div>
<div style="left:1034px;top:198px;width:1px;height:27px;background:#a0a0a0"></div>
<div style="left:1120px;top:198px;width:1px;height:27px;background:#a0a0a0"></div>
<div style="left:1206px;top:198px;width:1px;height:27px;background:#a0a0a0"></div>
<div style="left:1340px;top:198px;width:1px;height:27px;background:#a0a0a0"></div>
<div style="left:1404px;top:198px;width:1px;height:27px;background:#a0a0a0"></div>
<div class="t" style="left:411px;top:203.96px;font-size:16.0px;line-height:16.0px;word-spacing:1.11px;transform:scaleX(0.9000);transform-origin:0 0;color:#000;">4</div>
<div class="t" style="left:468px;top:203.96px;font-size:16.0px;line-height:16.0px;word-spacing:1.15px;transform:scaleX(0.8671);transform-origin:0 0;color:#000;">10/7/2020 8:00 PM</div>
<div class="t" style="left:605px;top:203.96px;font-size:16.0px;line-height:16.0px;word-spacing:1.11px;transform:scaleX(0.9000);transform-origin:0 0;color:#000;">2100</div>
<div class="t" style="left:691px;top:203.96px;font-size:16.0px;line-height:16.0px;word-spacing:1.11px;transform:scaleX(0.9000);transform-origin:0 0;color:#000;">2100</div>
<div class="t" style="left:779px;top:203.96px;font-size:16.0px;line-height:16.0px;word-spacing:1.14px;transform:scaleX(0.8800);transform-origin:0 0;color:#000;">00:00:00</div>
<div class="t" style="left:865px;top:203.96px;font-size:16.0px;line-height:16.0px;word-spacing:1.14px;transform:scaleX(0.8800);transform-origin:0 0;color:#000;">00:00:00</div>
<div class="t" style="left:952px;top:203.96px;font-size:16.0px;line-height:16.0px;word-spacing:1.14px;transform:scaleX(0.8782);transform-origin:0 0;color:#000;">61490546...</div>
<div class="t" style="left:1039px;top:203.96px;font-size:16.0px;line-height:16.0px;word-spacing:1.14px;transform:scaleX(0.8782);transform-origin:0 0;color:#000;">61425725...</div>
<div class="t" style="left:1125px;top:203.96px;font-size:16.0px;line-height:16.0px;word-spacing:1.22px;transform:scaleX(0.8200);transform-origin:0 0;color:#000;">Not Active</div>
<div class="t" style="left:1211px;top:203.96px;font-size:16.0px;line-height:16.0px;word-spacing:1.22px;transform:scaleX(0.8200);transform-origin:0 0;color:#000;">RolloverHeartBeat...</div>
<div class="t" style="left:1345px;top:203.96px;font-size:16.0px;line-height:16.0px;word-spacing:1.22px;transform:scaleX(0.8200);transform-origin:0 0;color:#000;">Heartb...</div>
<div class="btn" style="left:1406px;top:200px;width:62px;height:24px"></div>
<div class="t" style="left:1416.5369875px;top:204.76px;font-size:16.0px;line-height:16.0px;word-spacing:1.22px;transform:scaleX(0.8200);transform-origin:0 0;color:#000;">Delete</div>
<div style="left:406px;top:226px;width:1064px;height:26px;background:#d3d3d3"></div>
<div style="left:406px;top:252px;width:1064px;height:1px;background:#a0a0a0"></div>
<div style="left:463px;top:226px;width:1px;height:26px;background:#a0a0a0"></div>
<div style="left:600px;top:226px;width:1px;height:26px;background:#a0a0a0"></div>
<div style="left:686px;top:226px;width:1px;height:26px;background:#a0a0a0"></div>
<div style="left:774px;top:226px;width:1px;height:26px;background:#a0a0a0"></div>
<div style="left:860px;top:226px;width:1px;height:26px;background:#a0a0a0"></div>
<div style="left:947px;top:226px;width:1px;height:26px;background:#a0a0a0"></div>
<div style="left:1034px;top:226px;width:1px;height:26px;background:#a0a0a0"></div>
<div style="left:1120px;top:226px;width:1px;height:26px;background:#a0a0a0"></div>
<div style="left:1206px;top:226px;width:1px;height:26px;background:#a0a0a0"></div>
<div style="left:1340px;top:226px;width:1px;height:26px;background:#a0a0a0"></div>
<div style="left:1404px;top:226px;width:1px;height:26px;background:#a0a0a0"></div>
<div class="t" style="left:411px;top:230.96px;font-size:16.0px;line-height:16.0px;word-spacing:1.11px;transform:scaleX(0.9000);transform-origin:0 0;color:#000;">5</div>
<div class="t" style="left:468px;top:230.96px;font-size:16.0px;line-height:16.0px;word-spacing:1.15px;transform:scaleX(0.8671);transform-origin:0 0;color:#000;">10/7/2020 8:00 PM</div>
<div class="t" style="left:605px;top:230.96px;font-size:16.0px;line-height:16.0px;word-spacing:1.11px;transform:scaleX(0.9000);transform-origin:0 0;color:#000;">2100</div>
<div class="t" style="left:691px;top:230.96px;font-size:16.0px;line-height:16.0px;word-spacing:1.11px;transform:scaleX(0.9000);transform-origin:0 0;color:#000;">2100</div>
<div class="t" style="left:779px;top:230.96px;font-size:16.0px;line-height:16.0px;word-spacing:1.14px;transform:scaleX(0.8800);transform-origin:0 0;color:#000;">00:00:00</div>
<div class="t" style="left:865px;top:230.96px;font-size:16.0px;line-height:16.0px;word-spacing:1.14px;transform:scaleX(0.8800);transform-origin:0 0;color:#000;">00:00:00</div>
<div class="t" style="left:952px;top:230.96px;font-size:16.0px;line-height:16.0px;word-spacing:1.14px;transform:scaleX(0.8782);transform-origin:0 0;color:#000;">61490546...</div>
<div class="t" style="left:1039px;top:230.96px;font-size:16.0px;line-height:16.0px;word-spacing:1.14px;transform:scaleX(0.8782);transform-origin:0 0;color:#000;">61425725...</div>
<div class="t" style="left:1125px;top:230.96px;font-size:16.0px;line-height:16.0px;word-spacing:1.22px;transform:scaleX(0.8200);transform-origin:0 0;color:#000;">Not Active</div>
<div class="t" style="left:1211px;top:230.96px;font-size:16.0px;line-height:16.0px;word-spacing:1.22px;transform:scaleX(0.8200);transform-origin:0 0;color:#000;">RolloverHeartBeat...</div>
<div class="t" style="left:1345px;top:230.96px;font-size:16.0px;line-height:16.0px;word-spacing:1.22px;transform:scaleX(0.8200);transform-origin:0 0;color:#000;">Heartb...</div>
<div class="btn" style="left:1406px;top:228px;width:62px;height:23px"></div>
<div class="t" style="left:1416.5369875px;top:232.26px;font-size:16.0px;line-height:16.0px;word-spacing:1.22px;transform:scaleX(0.8200);transform-origin:0 0;color:#000;">Delete</div>
<div style="left:406px;top:253px;width:1064px;height:27px;background:#d3d3d3"></div>
<div style="left:406px;top:280px;width:1064px;height:1px;background:#a0a0a0"></div>
<div style="left:463px;top:253px;width:1px;height:27px;background:#a0a0a0"></div>
<div style="left:600px;top:253px;width:1px;height:27px;background:#a0a0a0"></div>
<div style="left:686px;top:253px;width:1px;height:27px;background:#a0a0a0"></div>
<div style="left:774px;top:253px;width:1px;height:27px;background:#a0a0a0"></div>
<div style="left:860px;top:253px;width:1px;height:27px;background:#a0a0a0"></div>
<div style="left:947px;top:253px;width:1px;height:27px;background:#a0a0a0"></div>
<div style="left:1034px;top:253px;width:1px;height:27px;background:#a0a0a0"></div>
<div style="left:1120px;top:253px;width:1px;height:27px;background:#a0a0a0"></div>
<div style="left:1206px;top:253px;width:1px;height:27px;background:#a0a0a0"></div>
<div style="left:1340px;top:253px;width:1px;height:27px;background:#a0a0a0"></div>
<div style="left:1404px;top:253px;width:1px;height:27px;background:#a0a0a0"></div>
<div class="t" style="left:411px;top:258.96px;font-size:16.0px;line-height:16.0px;word-spacing:1.11px;transform:scaleX(0.9000);transform-origin:0 0;color:#000;">6</div>
<div class="t" style="left:468px;top:258.96px;font-size:16.0px;line-height:16.0px;word-spacing:1.15px;transform:scaleX(0.8671);transform-origin:0 0;color:#000;">10/7/2020 3:17 PM</div>
<div class="t" style="left:605px;top:258.96px;font-size:16.0px;line-height:16.0px;word-spacing:1.11px;transform:scaleX(0.9000);transform-origin:0 0;color:#000;">2100</div>
<div class="t" style="left:691px;top:258.96px;font-size:16.0px;line-height:16.0px;word-spacing:1.11px;transform:scaleX(0.9000);transform-origin:0 0;color:#000;">2100</div>
<div class="t" style="left:779px;top:258.96px;font-size:16.0px;line-height:16.0px;word-spacing:1.14px;transform:scaleX(0.8800);transform-origin:0 0;color:#000;">00:00:00</div>
<div class="t" style="left:865px;top:258.96px;font-size:16.0px;line-height:16.0px;word-spacing:1.14px;transform:scaleX(0.8800);transform-origin:0 0;color:#000;">00:00:00</div>
<div class="t" style="left:952px;top:258.96px;font-size:16.0px;line-height:16.0px;word-spacing:1.14px;transform:scaleX(0.8782);transform-origin:0 0;color:#000;">61490546...</div>
<div class="t" style="left:1039px;top:258.96px;font-size:16.0px;line-height:16.0px;word-spacing:1.14px;transform:scaleX(0.8782);transform-origin:0 0;color:#000;">61425725...</div>
<div class="t" style="left:1125px;top:258.96px;font-size:16.0px;line-height:16.0px;word-spacing:1.22px;transform:scaleX(0.8200);transform-origin:0 0;color:#000;">Not Active</div>
<div class="t" style="left:1211px;top:258.96px;font-size:16.0px;line-height:16.0px;word-spacing:1.22px;transform:scaleX(0.8200);transform-origin:0 0;color:#000;">BounceDAX@FD...</div>
<div class="t" style="left:1345px;top:258.96px;font-size:16.0px;line-height:16.0px;word-spacing:1.22px;transform:scaleX(0.8200);transform-origin:0 0;color:#000;">Heartb...</div>
<div class="btn" style="left:1406px;top:255px;width:62px;height:24px"></div>
<div class="t" style="left:1416.5369875px;top:259.76px;font-size:16.0px;line-height:16.0px;word-spacing:1.22px;transform:scaleX(0.8200);transform-origin:0 0;color:#000;">Delete</div>
<div style="left:406px;top:281px;width:1064px;height:26px;background:#ffffe0"></div>
<div style="left:406px;top:307px;width:1064px;height:1px;background:#a0a0a0"></div>
<div style="left:463px;top:281px;width:1px;height:26px;background:#a0a0a0"></div>
<div style="left:600px;top:281px;width:1px;height:26px;background:#a0a0a0"></div>
<div style="left:686px;top:281px;width:1px;height:26px;background:#a0a0a0"></div>
<div style="left:774px;top:281px;width:1px;height:26px;background:#a0a0a0"></div>
<div style="left:860px;top:281px;width:1px;height:26px;background:#a0a0a0"></div>
<div style="left:947px;top:281px;width:1px;height:26px;background:#a0a0a0"></div>
<div style="left:1034px;top:281px;width:1px;height:26px;background:#a0a0a0"></div>
<div style="left:1120px;top:281px;width:1px;height:26px;background:#a0a0a0"></div>
<div style="left:1206px;top:281px;width:1px;height:26px;background:#a0a0a0"></div>
<div style="left:1340px;top:281px;width:1px;height:26px;background:#a0a0a0"></div>
<div style="left:1404px;top:281px;width:1px;height:26px;background:#a0a0a0"></div>
<div class="t" style="left:411px;top:285.96px;font-size:16.0px;line-height:16.0px;word-spacing:1.11px;transform:scaleX(0.9000);transform-origin:0 0;color:#000;">7</div>
<div class="t" style="left:468px;top:285.96px;font-size:16.0px;line-height:16.0px;word-spacing:1.15px;transform:scaleX(0.8671);transform-origin:0 0;color:#000;">9/28/2020 1:15 AM</div>
<div class="t" style="left:605px;top:285.96px;font-size:16.0px;line-height:16.0px;word-spacing:1.11px;transform:scaleX(0.9000);transform-origin:0 0;color:#000;">2100</div>
<div class="t" style="left:691px;top:285.96px;font-size:16.0px;line-height:16.0px;word-spacing:1.11px;transform:scaleX(0.9000);transform-origin:0 0;color:#000;">2187</div>
<div class="t" style="left:779px;top:285.96px;font-size:16.0px;line-height:16.0px;word-spacing:1.14px;transform:scaleX(0.8800);transform-origin:0 0;color:#000;">00:36:27</div>
<div class="t" style="left:865px;top:285.96px;font-size:16.0px;line-height:16.0px;word-spacing:1.14px;transform:scaleX(0.8800);transform-origin:0 0;color:#000;">00:00:00</div>
<div class="t" style="left:952px;top:285.96px;font-size:16.0px;line-height:16.0px;word-spacing:1.14px;transform:scaleX(0.8782);transform-origin:0 0;color:#000;">61490546...</div>
<div class="t" style="left:1039px;top:285.96px;font-size:16.0px;line-height:16.0px;word-spacing:1.14px;transform:scaleX(0.8782);transform-origin:0 0;color:#000;">61425725...</div>
<div class="t" style="left:1125px;top:285.96px;font-size:16.0px;line-height:16.0px;word-spacing:1.22px;transform:scaleX(0.8200);transform-origin:0 0;color:#000;">Active</div>
<div class="t" style="left:1211px;top:285.96px;font-size:16.0px;line-height:16.0px;word-spacing:1.22px;transform:scaleX(0.8200);transform-origin:0 0;color:#000;">RolloverHasOccur...</div>
<div class="t" style="left:1345px;top:285.96px;font-size:16.0px;line-height:16.0px;word-spacing:1.22px;transform:scaleX(0.8200);transform-origin:0 0;color:#000;">Trigger</div>
<div class="btn" style="left:1406px;top:283px;width:62px;height:23px"></div>
<div class="t" style="left:1416.5369875px;top:287.26px;font-size:16.0px;line-height:16.0px;word-spacing:1.22px;transform:scaleX(0.8200);transform-origin:0 0;color:#000;">Delete</div>
<div style="left:406px;top:308px;width:1064px;height:27px;background:#90ee90"></div>
<div style="left:406px;top:335px;width:1064px;height:1px;background:#a0a0a0"></div>
<div style="left:463px;top:308px;width:1px;height:27px;background:#a0a0a0"></div>
<div style="left:600px;top:308px;width:1px;height:27px;background:#a0a0a0"></div>
<div style="left:686px;top:308px;width:1px;height:27px;background:#a0a0a0"></div>
<div style="left:774px;top:308px;width:1px;height:27px;background:#a0a0a0"></div>
<div style="left:860px;top:308px;width:1px;height:27px;background:#a0a0a0"></div>
<div style="left:947px;top:308px;width:1px;height:27px;background:#a0a0a0"></div>
<div style="left:1034px;top:308px;width:1px;height:27px;background:#a0a0a0"></div>
<div style="left:1120px;top:308px;width:1px;height:27px;background:#a0a0a0"></div>
<div style="left:1206px;top:308px;width:1px;height:27px;background:#a0a0a0"></div>
<div style="left:1340px;top:308px;width:1px;height:27px;background:#a0a0a0"></div>
<div style="left:1404px;top:308px;width:1px;height:27px;background:#a0a0a0"></div>
<div class="t" style="left:411px;top:313.96px;font-size:16.0px;line-height:16.0px;word-spacing:1.11px;transform:scaleX(0.9000);transform-origin:0 0;color:#000;">8</div>
<div class="t" style="left:468px;top:313.96px;font-size:16.0px;line-height:16.0px;word-spacing:1.15px;transform:scaleX(0.8671);transform-origin:0 0;color:#000;">10/7/2020 8:14 PM</div>
<div class="t" style="left:605px;top:313.96px;font-size:16.0px;line-height:16.0px;word-spacing:1.11px;transform:scaleX(0.9000);transform-origin:0 0;color:#000;">610</div>
<div class="t" style="left:691px;top:313.96px;font-size:16.0px;line-height:16.0px;word-spacing:1.11px;transform:scaleX(0.9000);transform-origin:0 0;color:#000;">596</div>
<div class="t" style="left:779px;top:313.96px;font-size:16.0px;line-height:16.0px;word-spacing:1.14px;transform:scaleX(0.8800);transform-origin:0 0;color:#000;">00:00:00</div>
<div class="t" style="left:865px;top:313.96px;font-size:16.0px;line-height:16.0px;word-spacing:1.14px;transform:scaleX(0.8800);transform-origin:0 0;color:#000;">00:00:00</div>
<div class="t" style="left:952px;top:313.96px;font-size:16.0px;line-height:16.0px;word-spacing:1.14px;transform:scaleX(0.8782);transform-origin:0 0;color:#000;">61490546...</div>
<div class="t" style="left:1039px;top:313.96px;font-size:16.0px;line-height:16.0px;word-spacing:1.14px;transform:scaleX(0.8782);transform-origin:0 0;color:#000;">61425725...</div>
<div class="t" style="left:1125px;top:313.96px;font-size:16.0px;line-height:16.0px;word-spacing:1.22px;transform:scaleX(0.8200);transform-origin:0 0;color:#000;">Active</div>
<div class="t" style="left:1211px;top:313.96px;font-size:16.0px;line-height:16.0px;word-spacing:1.16px;transform:scaleX(0.8600);transform-origin:0 0;color:#000;">7491.log</div>
<div class="t" style="left:1345px;top:313.96px;font-size:16.0px;line-height:16.0px;word-spacing:1.22px;transform:scaleX(0.8200);transform-origin:0 0;color:#000;">Heartb...</div>
<div class="btn" style="left:1406px;top:310px;width:62px;height:24px"></div>
<div class="t" style="left:1416.5369875px;top:314.76px;font-size:16.0px;line-height:16.0px;word-spacing:1.22px;transform:scaleX(0.8200);transform-origin:0 0;color:#000;">Delete</div>
<div style="left:406px;top:336px;width:1064px;height:26px;background:#90ee90"></div>
<div style="left:406px;top:362px;width:1064px;height:1px;background:#a0a0a0"></div>
<div style="left:463px;top:336px;width:1px;height:26px;background:#a0a0a0"></div>
<div style="left:600px;top:336px;width:1px;height:26px;background:#a0a0a0"></div>
<div style="left:686px;top:336px;width:1px;height:26px;background:#a0a0a0"></div>
<div style="left:774px;top:336px;width:1px;height:26px;background:#a0a0a0"></div>
<div style="left:860px;top:336px;width:1px;height:26px;background:#a0a0a0"></div>
<div style="left:947px;top:336px;width:1px;height:26px;background:#a0a0a0"></div>
<div style="left:1034px;top:336px;width:1px;height:26px;background:#a0a0a0"></div>
<div style="left:1120px;top:336px;width:1px;height:26px;background:#a0a0a0"></div>
<div style="left:1206px;top:336px;width:1px;height:26px;background:#a0a0a0"></div>
<div style="left:1340px;top:336px;width:1px;height:26px;background:#a0a0a0"></div>
<div style="left:1404px;top:336px;width:1px;height:26px;background:#a0a0a0"></div>
<div class="t" style="left:411px;top:340.96px;font-size:16.0px;line-height:16.0px;word-spacing:1.11px;transform:scaleX(0.9000);transform-origin:0 0;color:#000;">9</div>
<div class="t" style="left:468px;top:340.96px;font-size:16.0px;line-height:16.0px;word-spacing:1.15px;transform:scaleX(0.8671);transform-origin:0 0;color:#000;">10/7/2020 8:14 PM</div>
<div class="t" style="left:605px;top:340.96px;font-size:16.0px;line-height:16.0px;word-spacing:1.11px;transform:scaleX(0.9000);transform-origin:0 0;color:#000;">671</div>
<div class="t" style="left:691px;top:340.96px;font-size:16.0px;line-height:16.0px;word-spacing:1.11px;transform:scaleX(0.9000);transform-origin:0 0;color:#000;">657</div>
<div class="t" style="left:779px;top:340.96px;font-size:16.0px;line-height:16.0px;word-spacing:1.14px;transform:scaleX(0.8800);transform-origin:0 0;color:#000;">00:00:00</div>
<div class="t" style="left:865px;top:340.96px;font-size:16.0px;line-height:16.0px;word-spacing:1.14px;transform:scaleX(0.8800);transform-origin:0 0;color:#000;">00:00:00</div>
<div class="t" style="left:952px;top:340.96px;font-size:16.0px;line-height:16.0px;word-spacing:1.14px;transform:scaleX(0.8782);transform-origin:0 0;color:#000;">61490546...</div>
<div class="t" style="left:1039px;top:340.96px;font-size:16.0px;line-height:16.0px;word-spacing:1.14px;transform:scaleX(0.8782);transform-origin:0 0;color:#000;">61425725...</div>
<div class="t" style="left:1125px;top:340.96px;font-size:16.0px;line-height:16.0px;word-spacing:1.22px;transform:scaleX(0.8200);transform-origin:0 0;color:#000;">Active</div>
<div class="t" style="left:1211px;top:340.96px;font-size:16.0px;line-height:16.0px;word-spacing:1.16px;transform:scaleX(0.8600);transform-origin:0 0;color:#000;">7492.log</div>
<div class="t" style="left:1345px;top:340.96px;font-size:16.0px;line-height:16.0px;word-spacing:1.22px;transform:scaleX(0.8200);transform-origin:0 0;color:#000;">Heartb...</div>
<div class="btn" style="left:1406px;top:338px;width:62px;height:23px"></div>
<div class="t" style="left:1416.5369875px;top:342.26px;font-size:16.0px;line-height:16.0px;word-spacing:1.22px;transform:scaleX(0.8200);transform-origin:0 0;color:#000;">Delete</div>
<div style="left:406px;top:363px;width:1064px;height:27px;background:#90ee90"></div>
<div style="left:406px;top:390px;width:1064px;height:1px;background:#a0a0a0"></div>
<div style="left:463px;top:363px;width:1px;height:27px;background:#a0a0a0"></div>
<div style="left:600px;top:363px;width:1px;height:27px;background:#a0a0a0"></div>
<div style="left:686px;top:363px;width:1px;height:27px;background:#a0a0a0"></div>
<div style="left:774px;top:363px;width:1px;height:27px;background:#a0a0a0"></div>
<div style="left:860px;top:363px;width:1px;height:27px;background:#a0a0a0"></div>
<div style="left:947px;top:363px;width:1px;height:27px;background:#a0a0a0"></div>
<div style="left:1034px;top:363px;width:1px;height:27px;background:#a0a0a0"></div>
<div style="left:1120px;top:363px;width:1px;height:27px;background:#a0a0a0"></div>
<div style="left:1206px;top:363px;width:1px;height:27px;background:#a0a0a0"></div>
<div style="left:1340px;top:363px;width:1px;height:27px;background:#a0a0a0"></div>
<div style="left:1404px;top:363px;width:1px;height:27px;background:#a0a0a0"></div>
<div class="t" style="left:411px;top:368.96px;font-size:16.0px;line-height:16.0px;word-spacing:1.11px;transform:scaleX(0.9000);transform-origin:0 0;color:#000;">10</div>
<div class="t" style="left:468px;top:368.96px;font-size:16.0px;line-height:16.0px;word-spacing:1.15px;transform:scaleX(0.8671);transform-origin:0 0;color:#000;">10/7/2020 8:14 PM</div>
<div class="t" style="left:605px;top:368.96px;font-size:16.0px;line-height:16.0px;word-spacing:1.11px;transform:scaleX(0.9000);transform-origin:0 0;color:#000;">700</div>
<div class="t" style="left:691px;top:368.96px;font-size:16.0px;line-height:16.0px;word-spacing:1.11px;transform:scaleX(0.9000);transform-origin:0 0;color:#000;">686</div>
<div class="t" style="left:779px;top:368.96px;font-size:16.0px;line-height:16.0px;word-spacing:1.14px;transform:scaleX(0.8800);transform-origin:0 0;color:#000;">00:00:00</div>
<div class="t" style="left:865px;top:368.96px;font-size:16.0px;line-height:16.0px;word-spacing:1.14px;transform:scaleX(0.8800);transform-origin:0 0;color:#000;">00:00:00</div>
<div class="t" style="left:952px;top:368.96px;font-size:16.0px;line-height:16.0px;word-spacing:1.14px;transform:scaleX(0.8782);transform-origin:0 0;color:#000;">61490546...</div>
<div class="t" style="left:1039px;top:368.96px;font-size:16.0px;line-height:16.0px;word-spacing:1.14px;transform:scaleX(0.8782);transform-origin:0 0;color:#000;">61425725...</div>
<div class="t" style="left:1125px;top:368.96px;font-size:16.0px;line-height:16.0px;word-spacing:1.22px;transform:scaleX(0.8200);transform-origin:0 0;color:#000;">Active</div>
<div class="t" style="left:1211px;top:368.96px;font-size:16.0px;line-height:16.0px;word-spacing:1.16px;transform:scaleX(0.8600);transform-origin:0 0;color:#000;">7493.log</div>
<div class="t" style="left:1345px;top:368.96px;font-size:16.0px;line-height:16.0px;word-spacing:1.22px;transform:scaleX(0.8200);transform-origin:0 0;color:#000;">Heartb...</div>
<div class="btn" style="left:1406px;top:365px;width:62px;height:24px"></div>
<div class="t" style="left:1416.5369875px;top:369.76px;font-size:16.0px;line-height:16.0px;word-spacing:1.22px;transform:scaleX(0.8200);transform-origin:0 0;color:#000;">Delete</div>
<div style="left:406px;top:391px;width:1064px;height:26px;background:#d3d3d3"></div>
<div style="left:406px;top:417px;width:1064px;height:1px;background:#a0a0a0"></div>
<div style="left:463px;top:391px;width:1px;height:26px;background:#a0a0a0"></div>
<div style="left:600px;top:391px;width:1px;height:26px;background:#a0a0a0"></div>
<div style="left:686px;top:391px;width:1px;height:26px;background:#a0a0a0"></div>
<div style="left:774px;top:391px;width:1px;height:26px;background:#a0a0a0"></div>
<div style="left:860px;top:391px;width:1px;height:26px;background:#a0a0a0"></div>
<div style="left:947px;top:391px;width:1px;height:26px;background:#a0a0a0"></div>
<div style="left:1034px;top:391px;width:1px;height:26px;background:#a0a0a0"></div>
<div style="left:1120px;top:391px;width:1px;height:26px;background:#a0a0a0"></div>
<div style="left:1206px;top:391px;width:1px;height:26px;background:#a0a0a0"></div>
<div style="left:1340px;top:391px;width:1px;height:26px;background:#a0a0a0"></div>
<div style="left:1404px;top:391px;width:1px;height:26px;background:#a0a0a0"></div>
<div class="t" style="left:411px;top:395.96px;font-size:16.0px;line-height:16.0px;word-spacing:1.11px;transform:scaleX(0.9000);transform-origin:0 0;color:#000;">12</div>
<div class="t" style="left:468px;top:395.96px;font-size:16.0px;line-height:16.0px;word-spacing:1.15px;transform:scaleX(0.8671);transform-origin:0 0;color:#000;">10/7/2020 3:00 PM</div>
<div class="t" style="left:605px;top:395.96px;font-size:16.0px;line-height:16.0px;word-spacing:1.11px;transform:scaleX(0.9000);transform-origin:0 0;color:#000;">1900</div>
<div class="t" style="left:691px;top:395.96px;font-size:16.0px;line-height:16.0px;word-spacing:1.11px;transform:scaleX(0.9000);transform-origin:0 0;color:#000;">1900</div>
<div class="t" style="left:779px;top:395.96px;font-size:16.0px;line-height:16.0px;word-spacing:1.14px;transform:scaleX(0.8800);transform-origin:0 0;color:#000;">00:00:00</div>
<div class="t" style="left:865px;top:395.96px;font-size:16.0px;line-height:16.0px;word-spacing:1.14px;transform:scaleX(0.8800);transform-origin:0 0;color:#000;">00:00:00</div>
<div class="t" style="left:952px;top:395.96px;font-size:16.0px;line-height:16.0px;word-spacing:1.14px;transform:scaleX(0.8782);transform-origin:0 0;color:#000;">61490546...</div>
<div class="t" style="left:1039px;top:395.96px;font-size:16.0px;line-height:16.0px;word-spacing:1.14px;transform:scaleX(0.8782);transform-origin:0 0;color:#000;">61425725...</div>
<div class="t" style="left:1125px;top:395.96px;font-size:16.0px;line-height:16.0px;word-spacing:1.22px;transform:scaleX(0.8200);transform-origin:0 0;color:#000;">Not Active</div>
<div class="t" style="left:1211px;top:395.96px;font-size:16.0px;line-height:16.0px;word-spacing:1.21px;transform:scaleX(0.8250);transform-origin:0 0;color:#000;">GSBsys1@ES.D.txt</div>
<div class="t" style="left:1345px;top:395.96px;font-size:16.0px;line-height:16.0px;word-spacing:1.22px;transform:scaleX(0.8200);transform-origin:0 0;color:#000;">Heartb...</div>
<div class="btn" style="left:1406px;top:393px;width:62px;height:23px"></div>
<div class="t" style="left:1416.5369875px;top:397.26px;font-size:16.0px;line-height:16.0px;word-spacing:1.22px;transform:scaleX(0.8200);transform-origin:0 0;color:#000;">Delete</div>
<div style="left:406px;top:418px;width:1064px;height:27px;background:#d3d3d3"></div>
<div style="left:406px;top:445px;width:1064px;height:1px;background:#a0a0a0"></div>
<div style="left:463px;top:418px;width:1px;height:27px;background:#a0a0a0"></div>
<div style="left:600px;top:418px;width:1px;height:27px;background:#a0a0a0"></div>
<div style="left:686px;top:418px;width:1px;height:27px;background:#a0a0a0"></div>
<div style="left:774px;top:418px;width:1px;height:27px;background:#a0a0a0"></div>
<div style="left:860px;top:418px;width:1px;height:27px;background:#a0a0a0"></div>
<div style="left:947px;top:418px;width:1px;height:27px;background:#a0a0a0"></div>
<div style="left:1034px;top:418px;width:1px;height:27px;background:#a0a0a0"></div>
<div style="left:1120px;top:418px;width:1px;height:27px;background:#a0a0a0"></div>
<div style="left:1206px;top:418px;width:1px;height:27px;background:#a0a0a0"></div>
<div style="left:1340px;top:418px;width:1px;height:27px;background:#a0a0a0"></div>
<div style="left:1404px;top:418px;width:1px;height:27px;background:#a0a0a0"></div>
<div class="t" style="left:411px;top:423.96px;font-size:16.0px;line-height:16.0px;word-spacing:1.11px;transform:scaleX(0.9000);transform-origin:0 0;color:#000;">13</div>
<div class="t" style="left:468px;top:423.96px;font-size:16.0px;line-height:16.0px;word-spacing:1.15px;transform:scaleX(0.8671);transform-origin:0 0;color:#000;">10/7/2020 3:00 PM</div>
<div class="t" style="left:605px;top:423.96px;font-size:16.0px;line-height:16.0px;word-spacing:1.11px;transform:scaleX(0.9000);transform-origin:0 0;color:#000;">2100</div>
<div class="t" style="left:691px;top:423.96px;font-size:16.0px;line-height:16.0px;word-spacing:1.11px;transform:scaleX(0.9000);transform-origin:0 0;color:#000;">2100</div>
<div class="t" style="left:779px;top:423.96px;font-size:16.0px;line-height:16.0px;word-spacing:1.14px;transform:scaleX(0.8800);transform-origin:0 0;color:#000;">00:00:00</div>
<div class="t" style="left:865px;top:423.96px;font-size:16.0px;line-height:16.0px;word-spacing:1.14px;transform:scaleX(0.8800);transform-origin:0 0;color:#000;">00:00:00</div>
<div class="t" style="left:952px;top:423.96px;font-size:16.0px;line-height:16.0px;word-spacing:1.14px;transform:scaleX(0.8782);transform-origin:0 0;color:#000;">61490546...</div>
<div class="t" style="left:1039px;top:423.96px;font-size:16.0px;line-height:16.0px;word-spacing:1.14px;transform:scaleX(0.8782);transform-origin:0 0;color:#000;">61425725...</div>
<div class="t" style="left:1125px;top:423.96px;font-size:16.0px;line-height:16.0px;word-spacing:1.22px;transform:scaleX(0.8200);transform-origin:0 0;color:#000;">Not Active</div>
<div class="t" style="left:1211px;top:423.96px;font-size:16.0px;line-height:16.0px;word-spacing:1.19px;transform:scaleX(0.8385);transform-origin:0 0;color:#000;">rc2.15_DX.txt</div>
<div class="t" style="left:1345px;top:423.96px;font-size:16.0px;line-height:16.0px;word-spacing:1.22px;transform:scaleX(0.8200);transform-origin:0 0;color:#000;">Heartb...</div>
<div class="btn" style="left:1406px;top:420px;width:62px;height:24px"></div>
<div class="t" style="left:1416.5369875px;top:424.76px;font-size:16.0px;line-height:16.0px;word-spacing:1.22px;transform:scaleX(0.8200);transform-origin:0 0;color:#000;">Delete</div>
<div style="left:406px;top:446px;width:1064px;height:26px;background:#90ee90"></div>
<div style="left:406px;top:472px;width:1064px;height:1px;background:#a0a0a0"></div>
<div style="left:463px;top:446px;width:1px;height:26px;background:#a0a0a0"></div>
<div style="left:600px;top:446px;width:1px;height:26px;background:#a0a0a0"></div>
<div style="left:686px;top:446px;width:1px;height:26px;background:#a0a0a0"></div>
<div style="left:774px;top:446px;width:1px;height:26px;background:#a0a0a0"></div>
<div style="left:860px;top:446px;width:1px;height:26px;background:#a0a0a0"></div>
<div style="left:947px;top:446px;width:1px;height:26px;background:#a0a0a0"></div>
<div style="left:1034px;top:446px;width:1px;height:26px;background:#a0a0a0"></div>
<div style="left:1120px;top:446px;width:1px;height:26px;background:#a0a0a0"></div>
<div style="left:1206px;top:446px;width:1px;height:26px;background:#a0a0a0"></div>
<div style="left:1340px;top:446px;width:1px;height:26px;background:#a0a0a0"></div>
<div style="left:1404px;top:446px;width:1px;height:26px;background:#a0a0a0"></div>
<div class="t" style="left:411px;top:450.96px;font-size:16.0px;line-height:16.0px;word-spacing:1.11px;transform:scaleX(0.9000);transform-origin:0 0;color:#000;">14</div>
<div class="t" style="left:468px;top:450.96px;font-size:16.0px;line-height:16.0px;word-spacing:1.15px;transform:scaleX(0.8671);transform-origin:0 0;color:#000;">10/7/2020 8:00 PM</div>
<div class="t" style="left:605px;top:450.96px;font-size:16.0px;line-height:16.0px;word-spacing:1.11px;transform:scaleX(0.9000);transform-origin:0 0;color:#000;">2100</div>
<div class="t" style="left:691px;top:450.96px;font-size:16.0px;line-height:16.0px;word-spacing:1.11px;transform:scaleX(0.9000);transform-origin:0 0;color:#000;">2014</div>
<div class="t" style="left:779px;top:450.96px;font-size:16.0px;line-height:16.0px;word-spacing:1.14px;transform:scaleX(0.8800);transform-origin:0 0;color:#000;">00:00:00</div>
<div class="t" style="left:865px;top:450.96px;font-size:16.0px;line-height:16.0px;word-spacing:1.14px;transform:scaleX(0.8800);transform-origin:0 0;color:#000;">00:00:00</div>
<div class="t" style="left:952px;top:450.96px;font-size:16.0px;line-height:16.0px;word-spacing:1.14px;transform:scaleX(0.8782);transform-origin:0 0;color:#000;">61490546...</div>
<div class="t" style="left:1039px;top:450.96px;font-size:16.0px;line-height:16.0px;word-spacing:1.14px;transform:scaleX(0.8782);transform-origin:0 0;color:#000;">61425725...</div>
<div class="t" style="left:1125px;top:450.96px;font-size:16.0px;line-height:16.0px;word-spacing:1.22px;transform:scaleX(0.8200);transform-origin:0 0;color:#000;">Active</div>
<div class="t" style="left:1211px;top:450.96px;font-size:16.0px;line-height:16.0px;word-spacing:1.22px;transform:scaleX(0.8200);transform-origin:0 0;color:#000;">RolloverHeartBeat...</div>
<div class="t" style="left:1345px;top:450.96px;font-size:16.0px;line-height:16.0px;word-spacing:1.22px;transform:scaleX(0.8200);transform-origin:0 0;color:#000;">Heartb...</div>
<div class="btn" style="left:1406px;top:448px;width:62px;height:23px"></div>
<div class="t" style="left:1416.5369875px;top:452.26px;font-size:16.0px;line-height:16.0px;word-spacing:1.22px;transform:scaleX(0.8200);transform-origin:0 0;color:#000;">Delete</div>
<div style="left:406px;top:473px;width:1064px;height:27px;background:#d3d3d3"></div>
<div style="left:406px;top:500px;width:1064px;height:1px;background:#a0a0a0"></div>
<div style="left:463px;top:473px;width:1px;height:27px;background:#a0a0a0"></div>
<div style="left:600px;top:473px;width:1px;height:27px;background:#a0a0a0"></div>
<div style="left:686px;top:473px;width:1px;height:27px;background:#a0a0a0"></div>
<div style="left:774px;top:473px;width:1px;height:27px;background:#a0a0a0"></div>
<div style="left:860px;top:473px;width:1px;height:27px;background:#a0a0a0"></div>
<div style="left:947px;top:473px;width:1px;height:27px;background:#a0a0a0"></div>
<div style="left:1034px;top:473px;width:1px;height:27px;background:#a0a0a0"></div>
<div style="left:1120px;top:473px;width:1px;height:27px;background:#a0a0a0"></div>
<div style="left:1206px;top:473px;width:1px;height:27px;background:#a0a0a0"></div>
<div style="left:1340px;top:473px;width:1px;height:27px;background:#a0a0a0"></div>
<div style="left:1404px;top:473px;width:1px;height:27px;background:#a0a0a0"></div>
<div class="t" style="left:411px;top:478.96px;font-size:16.0px;line-height:16.0px;word-spacing:1.11px;transform:scaleX(0.9000);transform-origin:0 0;color:#000;">15</div>
<div class="t" style="left:468px;top:478.96px;font-size:16.0px;line-height:16.0px;word-spacing:1.15px;transform:scaleX(0.8689);transform-origin:0 0;color:#000;">10/7/2020 12:30 PM</div>
<div class="t" style="left:605px;top:478.96px;font-size:16.0px;line-height:16.0px;word-spacing:1.11px;transform:scaleX(0.9000);transform-origin:0 0;color:#000;">2100</div>
<div class="t" style="left:691px;top:478.96px;font-size:16.0px;line-height:16.0px;word-spacing:1.11px;transform:scaleX(0.9000);transform-origin:0 0;color:#000;">2100</div>
<div class="t" style="left:779px;top:478.96px;font-size:16.0px;line-height:16.0px;word-spacing:1.14px;transform:scaleX(0.8800);transform-origin:0 0;color:#000;">00:00:00</div>
<div class="t" style="left:865px;top:478.96px;font-size:16.0px;line-height:16.0px;word-spacing:1.14px;transform:scaleX(0.8800);transform-origin:0 0;color:#000;">00:00:00</div>
<div class="t" style="left:952px;top:478.96px;font-size:16.0px;line-height:16.0px;word-spacing:1.14px;transform:scaleX(0.8782);transform-origin:0 0;color:#000;">61490546...</div>
<div class="t" style="left:1039px;top:478.96px;font-size:16.0px;line-height:16.0px;word-spacing:1.14px;transform:scaleX(0.8782);transform-origin:0 0;color:#000;">61425725...</div>
<div class="t" style="left:1125px;top:478.96px;font-size:16.0px;line-height:16.0px;word-spacing:1.22px;transform:scaleX(0.8200);transform-origin:0 0;color:#000;">Not Active</div>
<div class="t" style="left:1211px;top:478.96px;font-size:16.0px;line-height:16.0px;word-spacing:1.21px;transform:scaleX(0.8253);transform-origin:0 0;color:#000;">GSB_SI_sys1.txt</div>
<div class="t" style="left:1345px;top:478.96px;font-size:16.0px;line-height:16.0px;word-spacing:1.22px;transform:scaleX(0.8200);transform-origin:0 0;color:#000;">Heartb...</div>
<div class="btn" style="left:1406px;top:475px;width:62px;height:24px"></div>
<div class="t" style="left:1416.5369875px;top:479.76px;font-size:16.0px;line-height:16.0px;word-spacing:1.22px;transform:scaleX(0.8200);transform-origin:0 0;color:#000;">Delete</div>
<div style="left:406px;top:501px;width:1064px;height:26px;background:#d3d3d3"></div>
<div style="left:406px;top:527px;width:1064px;height:1px;background:#a0a0a0"></div>
<div style="left:463px;top:501px;width:1px;height:26px;background:#a0a0a0"></div>
<div style="left:600px;top:501px;width:1px;height:26px;background:#a0a0a0"></div>
<div style="left:686px;top:501px;width:1px;height:26px;background:#a0a0a0"></div>
<div style="left:774px;top:501px;width:1px;height:26px;background:#a0a0a0"></div>
<div style="left:860px;top:501px;width:1px;height:26px;background:#a0a0a0"></div>
<div style="left:947px;top:501px;width:1px;height:26px;background:#a0a0a0"></div>
<div style="left:1034px;top:501px;width:1px;height:26px;background:#a0a0a0"></div>
<div style="left:1120px;top:501px;width:1px;height:26px;background:#a0a0a0"></div>
<div style="left:1206px;top:501px;width:1px;height:26px;background:#a0a0a0"></div>
<div style="left:1340px;top:501px;width:1px;height:26px;background:#a0a0a0"></div>
<div style="left:1404px;top:501px;width:1px;height:26px;background:#a0a0a0"></div>
<div class="t" style="left:411px;top:505.96px;font-size:16.0px;line-height:16.0px;word-spacing:1.11px;transform:scaleX(0.9000);transform-origin:0 0;color:#000;">16</div>
<div class="t" style="left:468px;top:505.96px;font-size:16.0px;line-height:16.0px;word-spacing:1.15px;transform:scaleX(0.8671);transform-origin:0 0;color:#000;">10/7/2020 1:30 PM</div>
<div class="t" style="left:605px;top:505.96px;font-size:16.0px;line-height:16.0px;word-spacing:1.11px;transform:scaleX(0.9000);transform-origin:0 0;color:#000;">2100</div>
<div class="t" style="left:691px;top:505.96px;font-size:16.0px;line-height:16.0px;word-spacing:1.11px;transform:scaleX(0.9000);transform-origin:0 0;color:#000;">2100</div>
<div class="t" style="left:779px;top:505.96px;font-size:16.0px;line-height:16.0px;word-spacing:1.14px;transform:scaleX(0.8800);transform-origin:0 0;color:#000;">00:00:00</div>
<div class="t" style="left:865px;top:505.96px;font-size:16.0px;line-height:16.0px;word-spacing:1.14px;transform:scaleX(0.8800);transform-origin:0 0;color:#000;">00:00:00</div>
<div class="t" style="left:952px;top:505.96px;font-size:16.0px;line-height:16.0px;word-spacing:1.14px;transform:scaleX(0.8782);transform-origin:0 0;color:#000;">61490546...</div>
<div class="t" style="left:1039px;top:505.96px;font-size:16.0px;line-height:16.0px;word-spacing:1.14px;transform:scaleX(0.8782);transform-origin:0 0;color:#000;">61425725...</div>
<div class="t" style="left:1125px;top:505.96px;font-size:16.0px;line-height:16.0px;word-spacing:1.22px;transform:scaleX(0.8200);transform-origin:0 0;color:#000;">Not Active</div>
<div class="t" style="left:1211px;top:505.96px;font-size:16.0px;line-height:16.0px;word-spacing:1.22px;transform:scaleX(0.8200);transform-origin:0 0;color:#000;">GSB_CL_CoPld.txt</div>
<div class="t" style="left:1345px;top:505.96px;font-size:16.0px;line-height:16.0px;word-spacing:1.22px;transform:scaleX(0.8200);transform-origin:0 0;color:#000;">Heartb...</div>
<div class="btn" style="left:1406px;top:503px;width:62px;height:23px"></div>
<div class="t" style="left:1416.5369875px;top:507.26px;font-size:16.0px;line-height:16.0px;word-spacing:1.22px;transform:scaleX(0.8200);transform-origin:0 0;color:#000;">Delete</div>
<div style="left:406px;top:528px;width:1064px;height:27px;background:#90ee90"></div>
<div style="left:406px;top:555px;width:1064px;height:1px;background:#a0a0a0"></div>
<div style="left:463px;top:528px;width:1px;height:27px;background:#a0a0a0"></div>
<div style="left:600px;top:528px;width:1px;height:27px;background:#a0a0a0"></div>
<div style="left:686px;top:528px;width:1px;height:27px;background:#a0a0a0"></div>
<div style="left:774px;top:528px;width:1px;height:27px;background:#a0a0a0"></div>
<div style="left:860px;top:528px;width:1px;height:27px;background:#a0a0a0"></div>
<div style="left:947px;top:528px;width:1px;height:27px;background:#a0a0a0"></div>
<div style="left:1034px;top:528px;width:1px;height:27px;background:#a0a0a0"></div>
<div style="left:1120px;top:528px;width:1px;height:27px;background:#a0a0a0"></div>
<div style="left:1206px;top:528px;width:1px;height:27px;background:#a0a0a0"></div>
<div style="left:1340px;top:528px;width:1px;height:27px;background:#a0a0a0"></div>
<div style="left:1404px;top:528px;width:1px;height:27px;background:#a0a0a0"></div>
<div class="t" style="left:411px;top:533.96px;font-size:16.0px;line-height:16.0px;word-spacing:1.11px;transform:scaleX(0.9000);transform-origin:0 0;color:#000;">18</div>
<div class="t" style="left:468px;top:533.96px;font-size:16.0px;line-height:16.0px;word-spacing:1.15px;transform:scaleX(0.8671);transform-origin:0 0;color:#000;">10/7/2020 8:14 PM</div>
<div class="t" style="left:605px;top:533.96px;font-size:16.0px;line-height:16.0px;word-spacing:1.11px;transform:scaleX(0.9000);transform-origin:0 0;color:#000;">2100</div>
<div class="t" style="left:691px;top:533.96px;font-size:16.0px;line-height:16.0px;word-spacing:1.11px;transform:scaleX(0.9000);transform-origin:0 0;color:#000;">2100</div>
<div class="t" style="left:779px;top:533.96px;font-size:16.0px;line-height:16.0px;word-spacing:1.14px;transform:scaleX(0.8800);transform-origin:0 0;color:#000;">00:00:00</div>
<div class="t" style="left:865px;top:533.96px;font-size:16.0px;line-height:16.0px;word-spacing:1.14px;transform:scaleX(0.8800);transform-origin:0 0;color:#000;">00:00:00</div>
<div class="t" style="left:952px;top:533.96px;font-size:16.0px;line-height:16.0px;word-spacing:1.14px;transform:scaleX(0.8782);transform-origin:0 0;color:#000;">61490546...</div>
<div class="t" style="left:1039px;top:533.96px;font-size:16.0px;line-height:16.0px;word-spacing:1.14px;transform:scaleX(0.8782);transform-origin:0 0;color:#000;">61425725...</div>
<div class="t" style="left:1125px;top:533.96px;font-size:16.0px;line-height:16.0px;word-spacing:1.22px;transform:scaleX(0.8200);transform-origin:0 0;color:#000;">Active</div>
<div class="t" style="left:1211px;top:533.96px;font-size:16.0px;line-height:16.0px;word-spacing:1.22px;transform:scaleX(0.8200);transform-origin:0 0;color:#000;">heartbeat.log</div>
<div class="t" style="left:1345px;top:533.96px;font-size:16.0px;line-height:16.0px;word-spacing:1.22px;transform:scaleX(0.8200);transform-origin:0 0;color:#000;">Heartb...</div>
<div class="btn" style="left:1406px;top:530px;width:62px;height:24px"></div>
<div class="t" style="left:1416.5369875px;top:534.76px;font-size:16.0px;line-height:16.0px;word-spacing:1.22px;transform:scaleX(0.8200);transform-origin:0 0;color:#000;">Delete</div>
<div style="left:406px;top:556px;width:1064px;height:26px;background:#d3d3d3"></div>
<div style="left:406px;top:582px;width:1064px;height:1px;background:#a0a0a0"></div>
<div style="left:463px;top:556px;width:1px;height:26px;background:#a0a0a0"></div>
<div style="left:600px;top:556px;width:1px;height:26px;background:#a0a0a0"></div>
<div style="left:686px;top:556px;width:1px;height:26px;background:#a0a0a0"></div>
<div style="left:774px;top:556px;width:1px;height:26px;background:#a0a0a0"></div>
<div style="left:860px;top:556px;width:1px;height:26px;background:#a0a0a0"></div>
<div style="left:947px;top:556px;width:1px;height:26px;background:#a0a0a0"></div>
<div style="left:1034px;top:556px;width:1px;height:26px;background:#a0a0a0"></div>
<div style="left:1120px;top:556px;width:1px;height:26px;background:#a0a0a0"></div>
<div style="left:1206px;top:556px;width:1px;height:26px;background:#a0a0a0"></div>
<div style="left:1340px;top:556px;width:1px;height:26px;background:#a0a0a0"></div>
<div style="left:1404px;top:556px;width:1px;height:26px;background:#a0a0a0"></div>
<div class="t" style="left:411px;top:560.96px;font-size:16.0px;line-height:16.0px;word-spacing:1.11px;transform:scaleX(0.9000);transform-origin:0 0;color:#000;">19</div>
<div class="t" style="left:468px;top:560.96px;font-size:16.0px;line-height:16.0px;word-spacing:1.15px;transform:scaleX(0.8671);transform-origin:0 0;color:#000;">10/6/2020 3:17 PM</div>
<div class="t" style="left:605px;top:560.96px;font-size:16.0px;line-height:16.0px;word-spacing:1.11px;transform:scaleX(0.9000);transform-origin:0 0;color:#000;">350</div>
<div class="t" style="left:691px;top:560.96px;font-size:16.0px;line-height:16.0px;word-spacing:1.11px;transform:scaleX(0.9000);transform-origin:0 0;color:#000;">350</div>
<div class="t" style="left:779px;top:560.96px;font-size:16.0px;line-height:16.0px;word-spacing:1.14px;transform:scaleX(0.8800);transform-origin:0 0;color:#000;">00:00:00</div>
<div class="t" style="left:865px;top:560.96px;font-size:16.0px;line-height:16.0px;word-spacing:1.14px;transform:scaleX(0.8800);transform-origin:0 0;color:#000;">00:00:00</div>
<div class="t" style="left:952px;top:560.96px;font-size:16.0px;line-height:16.0px;word-spacing:1.14px;transform:scaleX(0.8782);transform-origin:0 0;color:#000;">61490546...</div>
<div class="t" style="left:1039px;top:560.96px;font-size:16.0px;line-height:16.0px;word-spacing:1.14px;transform:scaleX(0.8782);transform-origin:0 0;color:#000;">61425725...</div>
<div class="t" style="left:1125px;top:560.96px;font-size:16.0px;line-height:16.0px;word-spacing:1.22px;transform:scaleX(0.8200);transform-origin:0 0;color:#000;">Not Active</div>
<div class="t" style="left:1211px;top:560.96px;font-size:16.0px;line-height:16.0px;word-spacing:1.22px;transform:scaleX(0.8200);transform-origin:0 0;color:#000;">TP@ES.D</div>
<div class="t" style="left:1345px;top:560.96px;font-size:16.0px;line-height:16.0px;word-spacing:1.22px;transform:scaleX(0.8200);transform-origin:0 0;color:#000;">Heartb...</div>
<div class="btn" style="left:1406px;top:558px;width:62px;height:23px"></div>
<div class="t" style="left:1416.5369875px;top:562.26px;font-size:16.0px;line-height:16.0px;word-spacing:1.22px;transform:scaleX(0.8200);transform-origin:0 0;color:#000;">Delete</div>
<div style="left:406px;top:583px;width:1064px;height:27px;background:#d3d3d3"></div>
<div style="left:406px;top:610px;width:1064px;height:1px;background:#a0a0a0"></div>
<div style="left:463px;top:583px;width:1px;height:27px;background:#a0a0a0"></div>
<div style="left:600px;top:583px;width:1px;height:27px;background:#a0a0a0"></div>
<div style="left:686px;top:583px;width:1px;height:27px;background:#a0a0a0"></div>
<div style="left:774px;top:583px;width:1px;height:27px;background:#a0a0a0"></div>
<div style="left:860px;top:583px;width:1px;height:27px;background:#a0a0a0"></div>
<div style="left:947px;top:583px;width:1px;height:27px;background:#a0a0a0"></div>
<div style="left:1034px;top:583px;width:1px;height:27px;background:#a0a0a0"></div>
<div style="left:1120px;top:583px;width:1px;height:27px;background:#a0a0a0"></div>
<div style="left:1206px;top:583px;width:1px;height:27px;background:#a0a0a0"></div>
<div style="left:1340px;top:583px;width:1px;height:27px;background:#a0a0a0"></div>
<div style="left:1404px;top:583px;width:1px;height:27px;background:#a0a0a0"></div>
<div class="t" style="left:411px;top:588.96px;font-size:16.0px;line-height:16.0px;word-spacing:1.11px;transform:scaleX(0.9000);transform-origin:0 0;color:#000;">20</div>
<div class="t" style="left:468px;top:588.96px;font-size:16.0px;line-height:16.0px;word-spacing:1.15px;transform:scaleX(0.8671);transform-origin:0 0;color:#000;">10/7/2020 4:02 PM</div>
<div class="t" style="left:605px;top:588.96px;font-size:16.0px;line-height:16.0px;word-spacing:1.11px;transform:scaleX(0.9000);transform-origin:0 0;color:#000;">650</div>
<div class="t" style="left:691px;top:588.96px;font-size:16.0px;line-height:16.0px;word-spacing:1.11px;transform:scaleX(0.9000);transform-origin:0 0;color:#000;">650</div>
<div class="t" style="left:779px;top:588.96px;font-size:16.0px;line-height:16.0px;word-spacing:1.14px;transform:scaleX(0.8800);transform-origin:0 0;color:#000;">00:00:00</div>
<div class="t" style="left:865px;top:588.96px;font-size:16.0px;line-height:16.0px;word-spacing:1.14px;transform:scaleX(0.8800);transform-origin:0 0;color:#000;">00:00:00</div>
<div class="t" style="left:952px;top:588.96px;font-size:16.0px;line-height:16.0px;word-spacing:1.14px;transform:scaleX(0.8782);transform-origin:0 0;color:#000;">61490546...</div>
<div class="t" style="left:1039px;top:588.96px;font-size:16.0px;line-height:16.0px;word-spacing:1.14px;transform:scaleX(0.8782);transform-origin:0 0;color:#000;">61425725...</div>
<div class="t" style="left:1125px;top:588.96px;font-size:16.0px;line-height:16.0px;word-spacing:1.22px;transform:scaleX(0.8200);transform-origin:0 0;color:#000;">Not Active</div>
<div class="t" style="left:1211px;top:588.96px;font-size:16.0px;line-height:16.0px;word-spacing:1.22px;transform:scaleX(0.8200);transform-origin:0 0;color:#000;">Intra@NQ</div>
<div class="t" style="left:1345px;top:588.96px;font-size:16.0px;line-height:16.0px;word-spacing:1.22px;transform:scaleX(0.8200);transform-origin:0 0;color:#000;">Heartb...</div>
<div class="btn" style="left:1406px;top:585px;width:62px;height:24px"></div>
<div class="t" style="left:1416.5369875px;top:589.76px;font-size:16.0px;line-height:16.0px;word-spacing:1.22px;transform:scaleX(0.8200);transform-origin:0 0;color:#000;">Delete</div>
<div style="left:406px;top:611px;width:1064px;height:26px;background:#90ee90"></div>
<div style="left:406px;top:637px;width:1064px;height:1px;background:#a0a0a0"></div>
<div style="left:463px;top:611px;width:1px;height:26px;background:#a0a0a0"></div>
<div style="left:600px;top:611px;width:1px;height:26px;background:#a0a0a0"></div>
<div style="left:686px;top:611px;width:1px;height:26px;background:#a0a0a0"></div>
<div style="left:774px;top:611px;width:1px;height:26px;background:#a0a0a0"></div>
<div style="left:860px;top:611px;width:1px;height:26px;background:#a0a0a0"></div>
<div style="left:947px;top:611px;width:1px;height:26px;background:#a0a0a0"></div>
<div style="left:1034px;top:611px;width:1px;height:26px;background:#a0a0a0"></div>
<div style="left:1120px;top:611px;width:1px;height:26px;background:#a0a0a0"></div>
<div style="left:1206px;top:611px;width:1px;height:26px;background:#a0a0a0"></div>
<div style="left:1340px;top:611px;width:1px;height:26px;background:#a0a0a0"></div>
<div style="left:1404px;top:611px;width:1px;height:26px;background:#a0a0a0"></div>
<div class="t" style="left:411px;top:615.96px;font-size:16.0px;line-height:16.0px;word-spacing:1.11px;transform:scaleX(0.9000);transform-origin:0 0;color:#000;">21</div>
<div class="t" style="left:468px;top:615.96px;font-size:16.0px;line-height:16.0px;word-spacing:1.15px;transform:scaleX(0.8671);transform-origin:0 0;color:#000;">10/7/2020 8:10 PM</div>
<div class="t" style="left:605px;top:615.96px;font-size:16.0px;line-height:16.0px;word-spacing:1.11px;transform:scaleX(0.9000);transform-origin:0 0;color:#000;">650</div>
<div class="t" style="left:691px;top:615.96px;font-size:16.0px;line-height:16.0px;word-spacing:1.11px;transform:scaleX(0.9000);transform-origin:0 0;color:#000;">564</div>
<div class="t" style="left:779px;top:615.96px;font-size:16.0px;line-height:16.0px;word-spacing:1.14px;transform:scaleX(0.8800);transform-origin:0 0;color:#000;">00:00:00</div>
<div class="t" style="left:865px;top:615.96px;font-size:16.0px;line-height:16.0px;word-spacing:1.14px;transform:scaleX(0.8800);transform-origin:0 0;color:#000;">00:00:00</div>
<div class="t" style="left:952px;top:615.96px;font-size:16.0px;line-height:16.0px;word-spacing:1.14px;transform:scaleX(0.8782);transform-origin:0 0;color:#000;">61490546...</div>
<div class="t" style="left:1039px;top:615.96px;font-size:16.0px;line-height:16.0px;word-spacing:1.14px;transform:scaleX(0.8782);transform-origin:0 0;color:#000;">61425725...</div>
<div class="t" style="left:1125px;top:615.96px;font-size:16.0px;line-height:16.0px;word-spacing:1.22px;transform:scaleX(0.8200);transform-origin:0 0;color:#000;">Active</div>
<div class="t" style="left:1211px;top:615.96px;font-size:16.0px;line-height:16.0px;word-spacing:1.20px;transform:scaleX(0.8314);transform-origin:0 0;color:#000;">8_mr.HG</div>
<div class="t" style="left:1345px;top:615.96px;font-size:16.0px;line-height:16.0px;word-spacing:1.22px;transform:scaleX(0.8200);transform-origin:0 0;color:#000;">Heartb...</div>
<div class="btn" style="left:1406px;top:613px;width:62px;height:23px"></div>
<div class="t" style="left:1416.5369875px;top:617.26px;font-size:16.0px;line-height:16.0px;word-spacing:1.22px;transform:scaleX(0.8200);transform-origin:0 0;color:#000;">Delete</div>
<div style="left:406px;top:638px;width:1064px;height:27px;background:#d3d3d3"></div>
<div style="left:406px;top:665px;width:1064px;height:1px;background:#a0a0a0"></div>
<div style="left:463px;top:638px;width:1px;height:27px;background:#a0a0a0"></div>
<div style="left:600px;top:638px;width:1px;height:27px;background:#a0a0a0"></div>
<div style="left:686px;top:638px;width:1px;height:27px;background:#a0a0a0"></div>
<div style="left:774px;top:638px;width:1px;height:27px;background:#a0a0a0"></div>
<div style="left:860px;top:638px;width:1px;height:27px;background:#a0a0a0"></div>
<div style="left:947px;top:638px;width:1px;height:27px;background:#a0a0a0"></div>
<div style="left:1034px;top:638px;width:1px;height:27px;background:#a0a0a0"></div>
<div style="left:1120px;top:638px;width:1px;height:27px;background:#a0a0a0"></div>
<div style="left:1206px;top:638px;width:1px;height:27px;background:#a0a0a0"></div>
<div style="left:1340px;top:638px;width:1px;height:27px;background:#a0a0a0"></div>
<div style="left:1404px;top:638px;width:1px;height:27px;background:#a0a0a0"></div>
<div class="t" style="left:411px;top:643.96px;font-size:16.0px;line-height:16.0px;word-spacing:1.11px;transform:scaleX(0.9000);transform-origin:0 0;color:#000;">22</div>
<div class="t" style="left:468px;top:643.96px;font-size:16.0px;line-height:16.0px;word-spacing:1.15px;transform:scaleX(0.8671);transform-origin:0 0;color:#000;">10/7/2020 8:10 PM</div>
<div class="t" style="left:605px;top:643.96px;font-size:16.0px;line-height:16.0px;word-spacing:1.11px;transform:scaleX(0.9000);transform-origin:0 0;color:#000;">650</div>
<div class="t" style="left:691px;top:643.96px;font-size:16.0px;line-height:16.0px;word-spacing:1.11px;transform:scaleX(0.9000);transform-origin:0 0;color:#000;">650</div>
<div class="t" style="left:779px;top:643.96px;font-size:16.0px;line-height:16.0px;word-spacing:1.14px;transform:scaleX(0.8800);transform-origin:0 0;color:#000;">00:00:00</div>
<div class="t" style="left:865px;top:643.96px;font-size:16.0px;line-height:16.0px;word-spacing:1.14px;transform:scaleX(0.8800);transform-origin:0 0;color:#000;">00:00:00</div>
<div class="t" style="left:952px;top:643.96px;font-size:16.0px;line-height:16.0px;word-spacing:1.14px;transform:scaleX(0.8782);transform-origin:0 0;color:#000;">61490546...</div>
<div class="t" style="left:1039px;top:643.96px;font-size:16.0px;line-height:16.0px;word-spacing:1.14px;transform:scaleX(0.8782);transform-origin:0 0;color:#000;">61425725...</div>
<div class="t" style="left:1125px;top:643.96px;font-size:16.0px;line-height:16.0px;word-spacing:1.22px;transform:scaleX(0.8200);transform-origin:0 0;color:#000;">Not Active</div>
<div class="t" style="left:1211px;top:643.96px;font-size:16.0px;line-height:16.0px;word-spacing:1.20px;transform:scaleX(0.8314);transform-origin:0 0;color:#000;">8_mr.cl</div>
<div class="t" style="left:1345px;top:643.96px;font-size:16.0px;line-height:16.0px;word-spacing:1.22px;transform:scaleX(0.8200);transform-origin:0 0;color:#000;">Heartb...</div>
<div class="btn" style="left:1406px;top:640px;width:62px;height:24px"></div>
<div class="t" style="left:1416.5369875px;top:644.76px;font-size:16.0px;line-height:16.0px;word-spacing:1.22px;transform:scaleX(0.8200);transform-origin:0 0;color:#000;">Delete</div>
<div style="left:406px;top:666px;width:1064px;height:26px;background:#ffffe0"></div>
<div style="left:406px;top:692px;width:1064px;height:1px;background:#a0a0a0"></div>
<div style="left:463px;top:666px;width:1px;height:26px;background:#a0a0a0"></div>
<div style="left:600px;top:666px;width:1px;height:26px;background:#a0a0a0"></div>
<div style="left:686px;top:666px;width:1px;height:26px;background:#a0a0a0"></div>
<div style="left:774px;top:666px;width:1px;height:26px;background:#a0a0a0"></div>
<div style="left:860px;top:666px;width:1px;height:26px;background:#a0a0a0"></div>
<div style="left:947px;top:666px;width:1px;height:26px;background:#a0a0a0"></div>
<div style="left:1034px;top:666px;width:1px;height:26px;background:#a0a0a0"></div>
<div style="left:1120px;top:666px;width:1px;height:26px;background:#a0a0a0"></div>
<div style="left:1206px;top:666px;width:1px;height:26px;background:#a0a0a0"></div>
<div style="left:1340px;top:666px;width:1px;height:26px;background:#a0a0a0"></div>
<div style="left:1404px;top:666px;width:1px;height:26px;background:#a0a0a0"></div>
<div class="t" style="left:411px;top:670.96px;font-size:16.0px;line-height:16.0px;word-spacing:1.11px;transform:scaleX(0.9000);transform-origin:0 0;color:#000;">23</div>
<div class="t" style="left:468px;top:670.96px;font-size:16.0px;line-height:16.0px;word-spacing:1.15px;transform:scaleX(0.8671);transform-origin:0 0;color:#000;">10/7/2020 2:30 PM</div>
<div class="t" style="left:605px;top:670.96px;font-size:16.0px;line-height:16.0px;word-spacing:1.11px;transform:scaleX(0.9000);transform-origin:0 0;color:#000;">2100</div>
<div class="t" style="left:691px;top:670.96px;font-size:16.0px;line-height:16.0px;word-spacing:1.11px;transform:scaleX(0.9000);transform-origin:0 0;color:#000;">2187</div>
<div class="t" style="left:779px;top:670.96px;font-size:16.0px;line-height:16.0px;word-spacing:1.14px;transform:scaleX(0.8800);transform-origin:0 0;color:#000;">00:36:27</div>
<div class="t" style="left:865px;top:670.96px;font-size:16.0px;line-height:16.0px;word-spacing:1.14px;transform:scaleX(0.8800);transform-origin:0 0;color:#000;">00:00:00</div>
<div class="t" style="left:952px;top:670.96px;font-size:16.0px;line-height:16.0px;word-spacing:1.14px;transform:scaleX(0.8782);transform-origin:0 0;color:#000;">61490546...</div>
<div class="t" style="left:1039px;top:670.96px;font-size:16.0px;line-height:16.0px;word-spacing:1.14px;transform:scaleX(0.8782);transform-origin:0 0;color:#000;">61425725...</div>
<div class="t" style="left:1125px;top:670.96px;font-size:16.0px;line-height:16.0px;word-spacing:1.22px;transform:scaleX(0.8200);transform-origin:0 0;color:#000;">Active</div>
<div class="t" style="left:1211px;top:670.96px;font-size:16.0px;line-height:16.0px;word-spacing:1.22px;transform:scaleX(0.8200);transform-origin:0 0;color:#000;">mrCL</div>
<div class="t" style="left:1345px;top:670.96px;font-size:16.0px;line-height:16.0px;word-spacing:1.22px;transform:scaleX(0.8200);transform-origin:0 0;color:#000;">Trigger</div>
<div class="btn" style="left:1406px;top:668px;width:62px;height:23px"></div>
<div class="t" style="left:1416.5369875px;top:672.26px;font-size:16.0px;line-height:16.0px;word-spacing:1.22px;transform:scaleX(0.8200);transform-origin:0 0;color:#000;">Delete</div>
<div style="left:406px;top:693px;width:1064px;height:27px;background:#ffffe0"></div>
<div style="left:406px;top:720px;width:1064px;height:1px;background:#a0a0a0"></div>
<div style="left:463px;top:693px;width:1px;height:27px;background:#a0a0a0"></div>
<div style="left:600px;top:693px;width:1px;height:27px;background:#a0a0a0"></div>
<div style="left:686px;top:693px;width:1px;height:27px;background:#a0a0a0"></div>
<div style="left:774px;top:693px;width:1px;height:27px;background:#a0a0a0"></div>
<div style="left:860px;top:693px;width:1px;height:27px;background:#a0a0a0"></div>
<div style="left:947px;top:693px;width:1px;height:27px;background:#a0a0a0"></div>
<div style="left:1034px;top:693px;width:1px;height:27px;background:#a0a0a0"></div>
<div style="left:1120px;top:693px;width:1px;height:27px;background:#a0a0a0"></div>
<div style="left:1206px;top:693px;width:1px;height:27px;background:#a0a0a0"></div>
<div style="left:1340px;top:693px;width:1px;height:27px;background:#a0a0a0"></div>
<div style="left:1404px;top:693px;width:1px;height:27px;background:#a0a0a0"></div>
<div class="t" style="left:411px;top:698.96px;font-size:16.0px;line-height:16.0px;word-spacing:1.11px;transform:scaleX(0.9000);transform-origin:0 0;color:#000;">24</div>
<div class="t" style="left:468px;top:698.96px;font-size:16.0px;line-height:16.0px;word-spacing:1.15px;transform:scaleX(0.8671);transform-origin:0 0;color:#000;">10/7/2020 3:00 PM</div>
<div class="t" style="left:605px;top:698.96px;font-size:16.0px;line-height:16.0px;word-spacing:1.11px;transform:scaleX(0.9000);transform-origin:0 0;color:#000;">2100</div>
<div class="t" style="left:691px;top:698.96px;font-size:16.0px;line-height:16.0px;word-spacing:1.11px;transform:scaleX(0.9000);transform-origin:0 0;color:#000;">2187</div>
<div class="t" style="left:779px;top:698.96px;font-size:16.0px;line-height:16.0px;word-spacing:1.14px;transform:scaleX(0.8800);transform-origin:0 0;color:#000;">00:36:27</div>
<div class="t" style="left:865px;top:698.96px;font-size:16.0px;line-height:16.0px;word-spacing:1.14px;transform:scaleX(0.8800);transform-origin:0 0;color:#000;">00:00:00</div>
<div class="t" style="left:952px;top:698.96px;font-size:16.0px;line-height:16.0px;word-spacing:1.14px;transform:scaleX(0.8782);transform-origin:0 0;color:#000;">61490546...</div>
<div class="t" style="left:1039px;top:698.96px;font-size:16.0px;line-height:16.0px;word-spacing:1.14px;transform:scaleX(0.8782);transform-origin:0 0;color:#000;">61425725...</div>
<div class="t" style="left:1125px;top:698.96px;font-size:16.0px;line-height:16.0px;word-spacing:1.22px;transform:scaleX(0.8200);transform-origin:0 0;color:#000;">Active</div>
<div class="t" style="left:1211px;top:698.96px;font-size:16.0px;line-height:16.0px;word-spacing:1.22px;transform:scaleX(0.8200);transform-origin:0 0;color:#000;">mrNQ</div>
<div class="t" style="left:1345px;top:698.96px;font-size:16.0px;line-height:16.0px;word-spacing:1.22px;transform:scaleX(0.8200);transform-origin:0 0;color:#000;">Trigger</div>
<div class="btn" style="left:1406px;top:695px;width:62px;height:24px"></div>
<div class="t" style="left:1416.5369875px;top:699.76px;font-size:16.0px;line-height:16.0px;word-spacing:1.22px;transform:scaleX(0.8200);transform-origin:0 0;color:#000;">Delete</div>
<div style="left:406px;top:721px;width:1064px;height:26px;background:#ffffe0"></div>
<div style="left:406px;top:747px;width:1064px;height:1px;background:#a0a0a0"></div>
<div style="left:463px;top:721px;width:1px;height:26px;background:#a0a0a0"></div>
<div style="left:600px;top:721px;width:1px;height:26px;background:#a0a0a0"></div>
<div style="left:686px;top:721px;width:1px;height:26px;background:#a0a0a0"></div>
<div style="left:774px;top:721px;width:1px;height:26px;background:#a0a0a0"></div>
<div style="left:860px;top:721px;width:1px;height:26px;background:#a0a0a0"></div>
<div style="left:947px;top:721px;width:1px;height:26px;background:#a0a0a0"></div>
<div style="left:1034px;top:721px;width:1px;height:26px;background:#a0a0a0"></div>
<div style="left:1120px;top:721px;width:1px;height:26px;background:#a0a0a0"></div>
<div style="left:1206px;top:721px;width:1px;height:26px;background:#a0a0a0"></div>
<div style="left:1340px;top:721px;width:1px;height:26px;background:#a0a0a0"></div>
<div style="left:1404px;top:721px;width:1px;height:26px;background:#a0a0a0"></div>
<div class="t" style="left:411px;top:725.96px;font-size:16.0px;line-height:16.0px;word-spacing:1.11px;transform:scaleX(0.9000);transform-origin:0 0;color:#000;">25</div>
<div class="t" style="left:468px;top:725.96px;font-size:16.0px;line-height:16.0px;word-spacing:1.15px;transform:scaleX(0.8671);transform-origin:0 0;color:#000;">10/7/2020 3:00 PM</div>
<div class="t" style="left:605px;top:725.96px;font-size:16.0px;line-height:16.0px;word-spacing:1.11px;transform:scaleX(0.9000);transform-origin:0 0;color:#000;">2100</div>
<div class="t" style="left:691px;top:725.96px;font-size:16.0px;line-height:16.0px;word-spacing:1.11px;transform:scaleX(0.9000);transform-origin:0 0;color:#000;">2187</div>
<div class="t" style="left:779px;top:725.96px;font-size:16.0px;line-height:16.0px;word-spacing:1.14px;transform:scaleX(0.8800);transform-origin:0 0;color:#000;">00:36:27</div>
<div class="t" style="left:865px;top:725.96px;font-size:16.0px;line-height:16.0px;word-spacing:1.14px;transform:scaleX(0.8800);transform-origin:0 0;color:#000;">00:00:00</div>
<div class="t" style="left:952px;top:725.96px;font-size:16.0px;line-height:16.0px;word-spacing:1.14px;transform:scaleX(0.8782);transform-origin:0 0;color:#000;">61490546...</div>
<div class="t" style="left:1039px;top:725.96px;font-size:16.0px;line-height:16.0px;word-spacing:1.14px;transform:scaleX(0.8782);transform-origin:0 0;color:#000;">61425725...</div>
<div class="t" style="left:1125px;top:725.96px;font-size:16.0px;line-height:16.0px;word-spacing:1.22px;transform:scaleX(0.8200);transform-origin:0 0;color:#000;">Active</div>
<div class="t" style="left:1211px;top:725.96px;font-size:16.0px;line-height:16.0px;word-spacing:1.22px;transform:scaleX(0.8200);transform-origin:0 0;color:#000;">mrGC</div>
<div class="t" style="left:1345px;top:725.96px;font-size:16.0px;line-height:16.0px;word-spacing:1.22px;transform:scaleX(0.8200);transform-origin:0 0;color:#000;">Trigger</div>
<div class="btn" style="left:1406px;top:723px;width:62px;height:23px"></div>
<div class="t" style="left:1416.5369875px;top:727.26px;font-size:16.0px;line-height:16.0px;word-spacing:1.22px;transform:scaleX(0.8200);transform-origin:0 0;color:#000;">Delete</div>
<div style="left:406px;top:748px;width:1064px;height:27px;background:#d3d3d3"></div>
<div style="left:406px;top:775px;width:1064px;height:1px;background:#a0a0a0"></div>
<div style="left:463px;top:748px;width:1px;height:27px;background:#a0a0a0"></div>
<div style="left:600px;top:748px;width:1px;height:27px;background:#a0a0a0"></div>
<div style="left:686px;top:748px;width:1px;height:27px;background:#a0a0a0"></div>
<div style="left:774px;top:748px;width:1px;height:27px;background:#a0a0a0"></div>
<div style="left:860px;top:748px;width:1px;height:27px;background:#a0a0a0"></div>
<div style="left:947px;top:748px;width:1px;height:27px;background:#a0a0a0"></div>
<div style="left:1034px;top:748px;width:1px;height:27px;background:#a0a0a0"></div>
<div style="left:1120px;top:748px;width:1px;height:27px;background:#a0a0a0"></div>
<div style="left:1206px;top:748px;width:1px;height:27px;background:#a0a0a0"></div>
<div style="left:1340px;top:748px;width:1px;height:27px;background:#a0a0a0"></div>
<div style="left:1404px;top:748px;width:1px;height:27px;background:#a0a0a0"></div>
<div class="t" style="left:411px;top:753.96px;font-size:16.0px;line-height:16.0px;word-spacing:1.11px;transform:scaleX(0.9000);transform-origin:0 0;color:#000;">26</div>
<div class="t" style="left:468px;top:753.96px;font-size:16.0px;line-height:16.0px;word-spacing:1.15px;transform:scaleX(0.8671);transform-origin:0 0;color:#000;">10/7/2020 3:17 PM</div>
<div class="t" style="left:605px;top:753.96px;font-size:16.0px;line-height:16.0px;word-spacing:1.11px;transform:scaleX(0.9000);transform-origin:0 0;color:#000;">700</div>
<div class="t" style="left:691px;top:753.96px;font-size:16.0px;line-height:16.0px;word-spacing:1.11px;transform:scaleX(0.9000);transform-origin:0 0;color:#000;">700</div>
<div class="t" style="left:779px;top:753.96px;font-size:16.0px;line-height:16.0px;word-spacing:1.14px;transform:scaleX(0.8800);transform-origin:0 0;color:#000;">00:00:00</div>
<div class="t" style="left:865px;top:753.96px;font-size:16.0px;line-height:16.0px;word-spacing:1.14px;transform:scaleX(0.8800);transform-origin:0 0;color:#000;">00:00:00</div>
<div class="t" style="left:952px;top:753.96px;font-size:16.0px;line-height:16.0px;word-spacing:1.14px;transform:scaleX(0.8782);transform-origin:0 0;color:#000;">61490546...</div>
<div class="t" style="left:1039px;top:753.96px;font-size:16.0px;line-height:16.0px;word-spacing:1.14px;transform:scaleX(0.8782);transform-origin:0 0;color:#000;">61425725...</div>
<div class="t" style="left:1125px;top:753.96px;font-size:16.0px;line-height:16.0px;word-spacing:1.22px;transform:scaleX(0.8200);transform-origin:0 0;color:#000;">Not Active</div>
<div class="t" style="left:1211px;top:753.96px;font-size:16.0px;line-height:16.0px;word-spacing:1.22px;transform:scaleX(0.8200);transform-origin:0 0;color:#000;">ZoneTrader</div>
<div class="t" style="left:1345px;top:753.96px;font-size:16.0px;line-height:16.0px;word-spacing:1.22px;transform:scaleX(0.8200);transform-origin:0 0;color:#000;">Heartb...</div>
<div class="btn" style="left:1406px;top:750px;width:62px;height:24px"></div>
<div class="t" style="left:1416.5369875px;top:754.76px;font-size:16.0px;line-height:16.0px;word-spacing:1.22px;transform:scaleX(0.8200);transform-origin:0 0;color:#000;">Delete</div>
<div style="left:406px;top:776px;width:1064px;height:26px;background:#90ee90"></div>
<div style="left:406px;top:802px;width:1064px;height:1px;background:#a0a0a0"></div>
<div style="left:463px;top:776px;width:1px;height:26px;background:#a0a0a0"></div>
<div style="left:600px;top:776px;width:1px;height:26px;background:#a0a0a0"></div>
<div style="left:686px;top:776px;width:1px;height:26px;background:#a0a0a0"></div>
<div style="left:774px;top:776px;width:1px;height:26px;background:#a0a0a0"></div>
<div style="left:860px;top:776px;width:1px;height:26px;background:#a0a0a0"></div>
<div style="left:947px;top:776px;width:1px;height:26px;background:#a0a0a0"></div>
<div style="left:1034px;top:776px;width:1px;height:26px;background:#a0a0a0"></div>
<div style="left:1120px;top:776px;width:1px;height:26px;background:#a0a0a0"></div>
<div style="left:1206px;top:776px;width:1px;height:26px;background:#a0a0a0"></div>
<div style="left:1340px;top:776px;width:1px;height:26px;background:#a0a0a0"></div>
<div style="left:1404px;top:776px;width:1px;height:26px;background:#a0a0a0"></div>
<div class="t" style="left:411px;top:780.96px;font-size:16.0px;line-height:16.0px;word-spacing:1.11px;transform:scaleX(0.9000);transform-origin:0 0;color:#000;">27</div>
<div class="t" style="left:468px;top:780.96px;font-size:16.0px;line-height:16.0px;word-spacing:1.15px;transform:scaleX(0.8671);transform-origin:0 0;color:#000;">10/7/2020 8:10 PM</div>
<div class="t" style="left:605px;top:780.96px;font-size:16.0px;line-height:16.0px;word-spacing:1.11px;transform:scaleX(0.9000);transform-origin:0 0;color:#000;">700</div>
<div class="t" style="left:691px;top:780.96px;font-size:16.0px;line-height:16.0px;word-spacing:1.11px;transform:scaleX(0.9000);transform-origin:0 0;color:#000;">614</div>
<div class="t" style="left:779px;top:780.96px;font-size:16.0px;line-height:16.0px;word-spacing:1.14px;transform:scaleX(0.8800);transform-origin:0 0;color:#000;">00:00:00</div>
<div class="t" style="left:865px;top:780.96px;font-size:16.0px;line-height:16.0px;word-spacing:1.14px;transform:scaleX(0.8800);transform-origin:0 0;color:#000;">00:00:00</div>
<div class="t" style="left:952px;top:780.96px;font-size:16.0px;line-height:16.0px;word-spacing:1.14px;transform:scaleX(0.8782);transform-origin:0 0;color:#000;">61490546...</div>
<div class="t" style="left:1039px;top:780.96px;font-size:16.0px;line-height:16.0px;word-spacing:1.14px;transform:scaleX(0.8782);transform-origin:0 0;color:#000;">61425725...</div>
<div class="t" style="left:1125px;top:780.96px;font-size:16.0px;line-height:16.0px;word-spacing:1.22px;transform:scaleX(0.8200);transform-origin:0 0;color:#000;">Active</div>
<div class="t" style="left:1211px;top:780.96px;font-size:16.0px;line-height:16.0px;word-spacing:1.22px;transform:scaleX(0.8200);transform-origin:0 0;color:#000;">mrES</div>
<div class="t" style="left:1345px;top:780.96px;font-size:16.0px;line-height:16.0px;word-spacing:1.22px;transform:scaleX(0.8200);transform-origin:0 0;color:#000;">Heartb...</div>
<div class="btn" style="left:1406px;top:778px;width:62px;height:23px"></div>
<div class="t" style="left:1416.5369875px;top:782.26px;font-size:16.0px;line-height:16.0px;word-spacing:1.22px;transform:scaleX(0.8200);transform-origin:0 0;color:#000;">Delete</div>
<div style="left:0px;top:986px;width:1477px;height:1px;background:#dcdcdc"></div>
<div style="left:3px;top:866px;width:351px;height:115px;border:1px solid #dcdcdc;box-sizing:border-box"></div>
<div style="left:11px;top:864px;width:61px;height:5px;background:#f0f0f0"></div>
<div class="t" style="left:14px;top:859.46px;font-size:16.0px;line-height:16.0px;word-spacing:1.22px;transform:scaleX(0.8200);transform-origin:0 0;color:#000;">Schedule</div>
<div class="t" style="left:17px;top:884.46px;font-size:16.0px;line-height:16.0px;word-spacing:1.22px;transform:scaleX(0.8200);transform-origin:0 0;color:#000;">Start Day</div>
<div style="left:78px;top:874px;width:93px;height:26px;background:#fff;border:1px solid #7a7a7a;box-sizing:border-box"></div>
<div class="t" style="left:82px;top:878.96px;font-size:16.0px;line-height:16.0px;word-spacing:1.22px;transform:scaleX(0.8200);transform-origin:0 0;color:#000;">Mon</div>
<svg style="position:absolute;left:154px;top:883.5px" width="12" height="7" viewBox="0 0 12 7"><path d="M1 1 L6 6 L11 1" fill="none" stroke="#404040" stroke-width="1.2"/></svg>
<div class="t" style="left:185px;top:883.46px;font-size:16.0px;line-height:16.0px;word-spacing:1.22px;transform:scaleX(0.8200);transform-origin:0 0;color:#000;">End Day</div>
<div style="left:245px;top:874px;width:94px;height:26px;background:#fff;border:1px solid #7a7a7a;box-sizing:border-box"></div>
<div class="t" style="left:249px;top:878.96px;font-size:16.0px;line-height:16.0px;word-spacing:1.22px;transform:scaleX(0.8200);transform-origin:0 0;color:#000;">Fri</div>
<svg style="position:absolute;left:322px;top:883.5px" width="12" height="7" viewBox="0 0 12 7"><path d="M1 1 L6 6 L11 1" fill="none" stroke="#404040" stroke-width="1.2"/></svg>
<div class="t" style="left:12px;top:918.46px;font-size:16.0px;line-height:16.0px;word-spacing:1.22px;transform:scaleX(0.8200);transform-origin:0 0;color:#000;">Start Time</div>
<div style="left:78px;top:908px;width:39px;height:25px;background:#fff;border:1px solid #adadad;box-shadow:inset 0 0 0 1px #e6e6e6;box-sizing:border-box"></div>
<div class="t" style="left:81px;top:912.46px;font-size:16.0px;line-height:16.0px;word-spacing:1.11px;transform:scaleX(0.9000);transform-origin:0 0;color:#000;">8</div>
<div style="left:97px;top:910px;width:18px;height:21px;background:#f0f0f0;border:1px solid #c8c8c8;box-sizing:border-box"></div>
<div style="left:98px;top:919.5px;width:16px;height:2px;background:#bdbdbd"></div>
<svg style="position:absolute;left:102px;top:913px" width="8" height="16" viewBox="0 0 8 16"><path d="M0.3 4.6 L4 0.9 L7.7 4.6 Z" fill="#000"/><path d="M0.3 11 L4 14.7 L7.7 11 Z" fill="#000"/></svg>
<div class="t" style="left:123px;top:914.46px;font-size:16.0px;line-height:16.0px;word-spacing:1.22px;transform:scaleX(0.8200);transform-origin:0 0;color:#000;">:</div>
<div style="left:133px;top:908px;width:40px;height:25px;background:#fff;border:1px solid #adadad;box-shadow:inset 0 0 0 1px #e6e6e6;box-sizing:border-box"></div>
<div class="t" style="left:136px;top:912.46px;font-size:16.0px;line-height:16.0px;word-spacing:1.11px;transform:scaleX(0.9000);transform-origin:0 0;color:#000;">55</div>
<div style="left:153px;top:910px;width:18px;height:21px;background:#f0f0f0;border:1px solid #c8c8c8;box-sizing:border-box"></div>
<div style="left:154px;top:919.5px;width:16px;height:2px;background:#bdbdbd"></div>
<svg style="position:absolute;left:158px;top:913px" width="8" height="16" viewBox="0 0 8 16"><path d="M0.3 4.6 L4 0.9 L7.7 4.6 Z" fill="#000"/><path d="M0.3 11 L4 14.7 L7.7 11 Z" fill="#000"/></svg>
<div class="t" style="left:180px;top:915.46px;font-size:16.0px;line-height:16.0px;word-spacing:1.22px;transform:scaleX(0.8200);transform-origin:0 0;color:#000;">End Time</div>
<div style="left:245px;top:906px;width:40px;height:25px;background:#fff;border:1px solid #adadad;box-shadow:inset 0 0 0 1px #e6e6e6;box-sizing:border-box"></div>
<div class="t" style="left:248px;top:910.46px;font-size:16.0px;line-height:16.0px;word-spacing:1.11px;transform:scaleX(0.9000);transform-origin:0 0;color:#000;">14</div>
<div style="left:265px;top:908px;width:18px;height:21px;background:#f0f0f0;border:1px solid #c8c8c8;box-sizing:border-box"></div>
<div style="left:266px;top:917.5px;width:16px;height:2px;background:#bdbdbd"></div>
<svg style="position:absolute;left:270px;top:911px" width="8" height="16" viewBox="0 0 8 16"><path d="M0.3 4.6 L4 0.9 L7.7 4.6 Z" fill="#000"/><path d="M0.3 11 L4 14.7 L7.7 11 Z" fill="#000"/></svg>
<div class="t" style="left:291px;top:913.46px;font-size:16.0px;line-height:16.0px;word-spacing:1.22px;transform:scaleX(0.8200);transform-origin:0 0;color:#000;">:</div>
<div style="left:299px;top:906px;width:40px;height:25px;background:#fff;border:1px solid #adadad;box-shadow:inset 0 0 0 1px #e6e6e6;box-sizing:border-box"></div>
<div class="t" style="left:302px;top:910.46px;font-size:16.0px;line-height:16.0px;word-spacing:1.11px;transform:scaleX(0.9000);transform-origin:0 0;color:#000;">59</div>
<div style="left:319px;top:908px;width:18px;height:21px;background:#f0f0f0;border:1px solid #c8c8c8;box-sizing:border-box"></div>
<div style="left:320px;top:917.5px;width:16px;height:2px;background:#bdbdbd"></div>
<svg style="position:absolute;left:324px;top:911px" width="8" height="16" viewBox="0 0 8 16"><path d="M0.3 4.6 L4 0.9 L7.7 4.6 Z" fill="#000"/><path d="M0.3 11 L4 14.7 L7.7 11 Z" fill="#000"/></svg>
<div style="left:15px;top:947px;width:17px;height:17px;background:#fff;border:1.5px solid #4d4d4d;box-sizing:border-box"></div>
<div class="t" style="left:39px;top:947.96px;font-size:16.0px;line-height:16.0px;word-spacing:1.22px;transform:scaleX(0.8200);transform-origin:0 0;color:#000;">Apply to All</div>
<div class="btn" style="left:144px;top:942px;width:95px;height:25px"></div>
<div class="t" style="left:180.1533375px;top:947.26px;font-size:16.0px;line-height:16.0px;word-spacing:1.22px;transform:scaleX(0.8200);transform-origin:0 0;color:#000;">Set</div>
<div class="btn" style="left:244px;top:942px;width:95px;height:25px"></div>
<div class="t" style="left:265.5722px;top:947.26px;font-size:16.0px;line-height:16.0px;word-spacing:1.22px;transform:scaleX(0.8200);transform-origin:0 0;color:#000;">Remove</div>
<div style="left:362px;top:866px;width:355px;height:115px;border:1px solid #dcdcdc;box-sizing:border-box"></div>
<div style="left:370px;top:864px;width:79px;height:5px;background:#f0f0f0"></div>
<div class="t" style="left:373px;top:859.46px;font-size:16.0px;line-height:16.0px;word-spacing:1.22px;transform:scaleX(0.8200);transform-origin:0 0;color:#000;">Snooze Line</div>
<div class="t" style="left:373px;top:901.46px;font-size:16.0px;line-height:16.0px;word-spacing:1.22px;transform:scaleX(0.8200);transform-origin:0 0;color:#000;">Count Down</div>
<div class="t" style="left:467px;top:901.46px;font-size:16.0px;line-height:16.0px;word-spacing:1.14px;transform:scaleX(0.8800);transform-origin:0 0;color:#000;">00:00:00</div>
<div class="t" style="left:403px;top:939.46px;font-size:16.0px;line-height:16.0px;word-spacing:1.22px;transform:scaleX(0.8200);transform-origin:0 0;color:#000;">Snooze</div>
<div style="left:463px;top:932px;width:101px;height:26px;background:#fff;border:1px solid #7a7a7a;box-sizing:border-box"></div>
<div class="t" style="left:467px;top:936.96px;font-size:16.0px;line-height:16.0px;word-spacing:1.20px;transform:scaleX(0.8300);transform-origin:0 0;color:#000;">Snooze 5</div>
<svg style="position:absolute;left:547px;top:941.5px" width="12" height="7" viewBox="0 0 12 7"><path d="M1 1 L6 6 L11 1" fill="none" stroke="#404040" stroke-width="1.2"/></svg>
<div class="btn" style="left:573px;top:932px;width:61px;height:25px"></div>
<div class="t" style="left:592.1533375px;top:937.26px;font-size:16.0px;line-height:16.0px;word-spacing:1.22px;transform:scaleX(0.8200);transform-origin:0 0;color:#000;">Set</div>
<div class="btn" style="left:644px;top:932px;width:61px;height:25px"></div>
<div class="t" style="left:652.5794375px;top:937.26px;font-size:16.0px;line-height:16.0px;word-spacing:1.22px;transform:scaleX(0.8200);transform-origin:0 0;color:#000;">Cancel</div>
<div style="left:724px;top:866px;width:355px;height:115px;border:1px solid #dcdcdc;box-sizing:border-box"></div>
<div style="left:732px;top:864px;width:92px;height:5px;background:#f0f0f0"></div>
<div class="t" style="left:735px;top:859.46px;font-size:16.0px;line-height:16.0px;word-spacing:1.22px;transform:scaleX(0.8200);transform-origin:0 0;color:#000;">Snooze Global</div>
<div class="t" style="left:735px;top:901.46px;font-size:16.0px;line-height:16.0px;word-spacing:1.22px;transform:scaleX(0.8200);transform-origin:0 0;color:#000;">Count Down</div>
<div class="t" style="left:829px;top:901.46px;font-size:16.0px;line-height:16.0px;word-spacing:1.14px;transform:scaleX(0.8800);transform-origin:0 0;color:#000;">00:00:00</div>
<div class="t" style="left:765px;top:937.46px;font-size:16.0px;line-height:16.0px;word-spacing:1.22px;transform:scaleX(0.8200);transform-origin:0 0;color:#000;">Snooze</div>
<div style="left:825px;top:928px;width:102px;height:26px;background:#fff;border:1px solid #7a7a7a;box-sizing:border-box"></div>
<div class="t" style="left:829px;top:932.96px;font-size:16.0px;line-height:16.0px;word-spacing:1.20px;transform:scaleX(0.8300);transform-origin:0 0;color:#000;">Snooze 5</div>
<svg style="position:absolute;left:910px;top:937.5px" width="12" height="7" viewBox="0 0 12 7"><path d="M1 1 L6 6 L11 1" fill="none" stroke="#404040" stroke-width="1.2"/></svg>
<div class="btn" style="left:935px;top:928px;width:62px;height:25px"></div>
<div class="t" style="left:954.6533375px;top:933.26px;font-size:16.0px;line-height:16.0px;word-spacing:1.22px;transform:scaleX(0.8200);transform-origin:0 0;color:#000;">Set</div>
<div class="btn" style="left:1006px;top:928px;width:62px;height:25px"></div>
<div class="t" style="left:1015.0794375px;top:933.26px;font-size:16.0px;line-height:16.0px;word-spacing:1.22px;transform:scaleX(0.8200);transform-origin:0 0;color:#000;">Cancel</div>
<div style="left:1086px;top:869px;width:17px;height:17px;background:#fff;border:1.5px solid #4d4d4d;box-sizing:border-box"></div>
<div class="t" style="left:1110px;top:871.46px;font-size:16.0px;line-height:16.0px;word-spacing:1.22px;transform:scaleX(0.8200);transform-origin:0 0;color:#000;">Expand Grid</div>
<div class="btn" style="left:1237px;top:862px;width:112px;height:31px"></div>
<div class="t" style="left:1263.2855375px;top:871.26px;font-size:16.0px;line-height:16.0px;word-spacing:1.22px;transform:scaleX(0.8200);transform-origin:0 0;color:#000;">Delete All</div>
<div class="btn" style="left:1359px;top:861px;width:113px;height:31px"></div>
<div class="t" style="left:1374.600225px;top:870.26px;font-size:16.0px;line-height:16.0px;word-spacing:1.22px;transform:scaleX(0.8200);transform-origin:0 0;color:#000;">Validate Data</div>
<div class="t" style="left:1094px;top:913.46px;font-size:16.0px;line-height:16.0px;word-spacing:1.15px;transform:scaleX(0.8680);transform-origin:0 0;color:#000;">10/7/2020 8:14:24 PM</div>
<div style="left:1475px;top:998px;width:2px;height:2px;background:#fafafa"></div>
<div style="left:1474px;top:997px;width:2.5px;height:2.5px;background:#999"></div>
<div style="left:1470px;top:1003px;width:2px;height:2px;background:#fafafa"></div>
<div style="left:1469px;top:1002px;width:2.5px;height:2.5px;background:#999"></div>
<div style="left:1475px;top:1003px;width:2px;height:2px;background:#fafafa"></div>
<div style="left:1474px;top:1002px;width:2.5px;height:2.5px;background:#999"></div>
<div style="left:1465px;top:1008px;width:2px;height:2px;background:#fafafa"></div>
<div style="left:1464px;top:1007px;width:2.5px;height:2.5px;background:#999"></div>
<div style="left:1470px;top:1008px;width:2px;height:2px;background:#fafafa"></div>
<div style="left:1469px;top:1007px;width:2.5px;height:2.5px;background:#999"></div>
<div style="left:1475px;top:1008px;width:2px;height:2px;background:#fafafa"></div>
<div style="left:1474px;top:1007px;width:2.5px;height:2.5px;background:#999"></div>
</body></html>
